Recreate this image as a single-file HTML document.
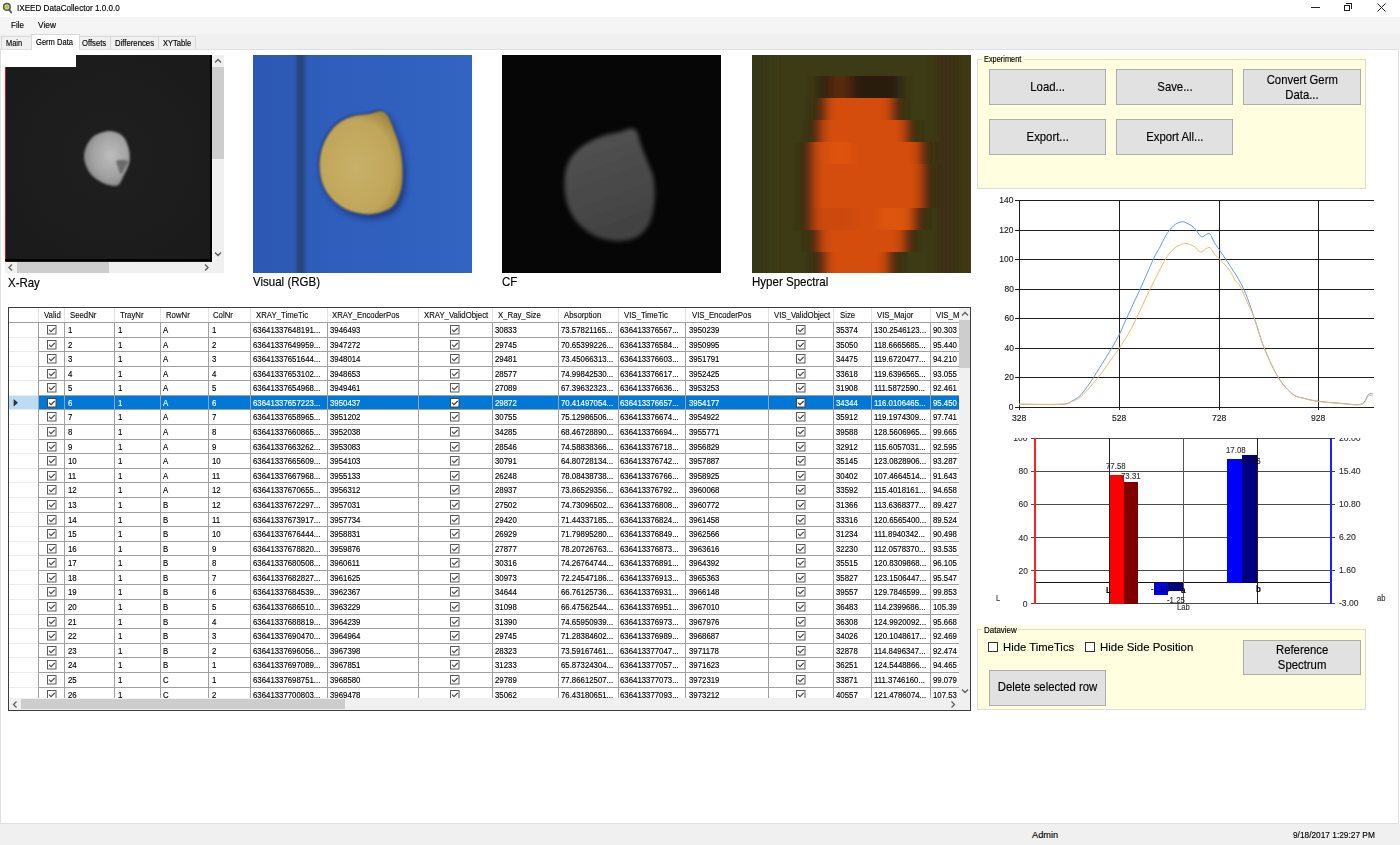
<!DOCTYPE html><html><head><meta charset="utf-8"><title>IXEED DataCollector</title><style>
*{margin:0;padding:0;box-sizing:border-box}
html,body{width:1400px;height:845px;overflow:hidden;background:#fff;font-family:"Liberation Sans",sans-serif;color:#000}
.a{position:absolute}
.t{position:absolute;white-space:nowrap;line-height:1;-webkit-text-stroke:0.15px currentColor}
.cb{position:absolute}
.btn{position:absolute;background:#e1e1e1;border:1px solid #adadad;font-size:11.5px;text-align:center;display:flex;align-items:center;justify-content:center;line-height:1.2;color:#000}
.gb{position:absolute;background:#ffffe0}
.gbb{position:absolute;border:1px solid #dcdcdc}
.hdr{font-size:7.8px;color:#111}
.cell{font-size:7.9px;color:#111}
.ax{font-size:8.6px;color:#222}
</style></head><body>
<div class="a" style="left:0;top:0;width:1400px;height:17px;background:#fff"></div>
<svg class="a" style="left:2px;top:2px" width="13" height="13" viewBox="0 0 13 13"><circle cx="4.9" cy="4.9" r="3.3" fill="#d4d890" stroke="#4f5a58" stroke-width="1.5"/><circle cx="4.9" cy="4.9" r="1.6" fill="#bcc40c"/><path d="M7.2 7.6 L9.2 10.6" stroke="#4f5a58" stroke-width="1.8" stroke-linecap="round"/></svg>
<div class="t" style="left:17px;top:3.98px;font-size:9px;color:#000;transform:scaleX(0.9);transform-origin:0 0;">IXEED DataCollector 1.0.0.0</div>
<div class="a" style="left:1311px;top:7px;width:9px;height:1px;background:#222"></div>
<div class="a" style="left:1344px;top:5px;width:6px;height:6px;border:1px solid #222;background:#fff"></div>
<div class="a" style="left:1346px;top:3px;width:6px;height:6px;border-top:1px solid #222;border-right:1px solid #222"></div>
<svg class="a" style="left:1377px;top:3px" width="10" height="9" viewBox="0 0 10 9"><path d="M0.5 0.5 L8.5 8.5 M8.5 0.5 L0.5 8.5" stroke="#222" stroke-width="1"/></svg>
<div class="a" style="left:0;top:17px;width:1400px;height:17px;background:#f5f5f5"></div>
<div class="t" style="left:11px;top:20.98px;font-size:9px;color:#000;transform:scaleX(0.9);transform-origin:0 0;">File</div>
<div class="t" style="left:38px;top:20.98px;font-size:9px;color:#000;transform:scaleX(0.93);transform-origin:0 0;">View</div>
<div class="a" style="left:0;top:34px;width:1400px;height:15px;background:#f0f0f0"></div>
<div class="a" style="left:1px;top:36px;width:31px;height:14px;border:1px solid #d9d9d9;border-bottom:none;background:#f0f0f0"></div>
<div class="t" style="left:6px;top:38.98px;font-size:9px;color:#000;transform:scaleX(0.82);transform-origin:0 0;">Main</div>
<div class="a" style="left:79px;top:36px;width:32px;height:14px;border:1px solid #d9d9d9;border-bottom:none;background:#f0f0f0"></div>
<div class="t" style="left:82px;top:38.98px;font-size:9px;color:#000;transform:scaleX(0.85);transform-origin:0 0;">Offsets</div>
<div class="a" style="left:110px;top:36px;width:49px;height:14px;border:1px solid #d9d9d9;border-bottom:none;background:#f0f0f0"></div>
<div class="t" style="left:115px;top:38.98px;font-size:9px;color:#000;transform:scaleX(0.86);transform-origin:0 0;">Differences</div>
<div class="a" style="left:158px;top:36px;width:38px;height:14px;border:1px solid #d9d9d9;border-bottom:none;background:#f0f0f0"></div>
<div class="t" style="left:163px;top:38.98px;font-size:9px;color:#000;transform:scaleX(0.84);transform-origin:0 0;">XYTable</div>
<div class="a" style="left:0;top:49px;width:1399px;height:775px;border:1px solid #e0e0e0;background:#fff"></div>
<div class="a" style="left:31px;top:34px;width:49px;height:16px;border:1px solid #d9d9d9;border-bottom:none;background:#fff"></div>
<div class="a" style="left:32px;top:49px;width:47px;height:2px;background:#fff"></div>
<div class="t" style="left:36px;top:37.58px;font-size:9px;color:#000;transform:scaleX(0.84);transform-origin:0 0;">Germ Data</div>
<div class="a" style="left:0;top:824px;width:1400px;height:21px;background:#f0f0f0"></div>
<div class="t" style="left:1032px;top:830.81px;font-size:9.2px;color:#000;">Admin</div>
<div class="t" style="left:1293px;top:830.71px;font-size:9.2px;color:#000;transform:scaleX(0.905);transform-origin:0 0;">9/18/2017 1:29:27 PM</div>
<div class="a" style="left:5px;top:55px;width:219px;height:218px;background:#f0f0f0"></div>
<svg class="a" style="left:5px;top:55px" width="207" height="207" viewBox="5 55 207 207">
<defs><radialGradient id="xg" cx="0.58" cy="0.45" r="0.65"><stop offset="0" stop-color="#bdbdbd"/><stop offset="0.6" stop-color="#a2a2a2"/><stop offset="1" stop-color="#808080"/></radialGradient>
<radialGradient id="xbg" cx="0.5" cy="0.5" r="0.75"><stop offset="0" stop-color="#1f1f1f"/><stop offset="1" stop-color="#1a1a1a"/></radialGradient>
<filter id="bl1" x="-0.2" y="-0.2" width="1.4" height="1.4"><feGaussianBlur stdDeviation="0.9"/></filter></defs>
<rect x="5" y="55" width="207" height="207" fill="url(#xbg)"/>
<rect x="5" y="55" width="1" height="207" fill="#e01010"/>
<path filter="url(#bl1)" d="M108.0 131.0 C112.0 130.5 115.2 131.7 118.0 133.0 C120.8 134.3 123.2 136.2 125.0 139.0 C126.8 141.8 128.2 146.3 129.0 150.0 C129.8 153.7 129.9 157.7 129.5 161.0 C129.1 164.3 127.7 167.2 126.5 170.0 C125.3 172.8 123.8 175.5 122.5 178.0 C121.2 180.5 120.4 183.8 118.5 185.0 C116.6 186.2 113.9 186.0 111.0 185.5 C108.1 185.0 104.2 183.7 101.0 182.0 C97.8 180.3 94.4 178.0 92.0 175.5 C89.6 173.0 87.8 170.1 86.5 167.0 C85.2 163.9 84.0 160.5 84.0 157.0 C84.0 153.5 84.8 149.5 86.5 146.0 C88.2 142.5 90.4 138.5 94.0 136.0 C97.6 133.5 104.0 131.5 108.0 131.0 Z" fill="url(#xg)"/>
<path filter="url(#bl1)" d="M116.5 161.0 C117.2 159.8 120.0 159.9 122.0 160.0 C124.0 160.1 128.0 160.2 128.5 161.5 C129.0 162.8 126.2 165.9 125.0 168.0 C123.8 170.1 122.2 174.2 121.0 174.0 C119.8 173.8 118.8 169.2 118.0 167.0 C117.2 164.8 115.8 162.2 116.5 161.0 Z" fill="#6a6a6a"/>
<rect x="210" y="55" width="2" height="207" fill="#000"/>
<rect x="5" y="259" width="207" height="2" fill="#000"/>
</svg>
<div class="a" style="left:5px;top:54px;width:71px;height:13px;background:#fff"></div>
<div class="a" style="left:76px;top:54px;width:136px;height:1px;background:#fff"></div>
<div class="a" style="left:212px;top:67px;width:12px;height:92px;background:#cdcdcd"></div>
<svg class="a" style="left:213px;top:57px" width="10" height="8" viewBox="0 0 10 8"><path d="M2 5.5 L5 2.5 L8 5.5" fill="none" stroke="#606060" stroke-width="1.4"/></svg>
<svg class="a" style="left:213px;top:250px" width="10" height="8" viewBox="0 0 10 8"><path d="M2 2.5 L5 5.5 L8 2.5" fill="none" stroke="#606060" stroke-width="1.4"/></svg>
<div class="a" style="left:17px;top:262px;width:92px;height:11px;background:#cdcdcd"></div>
<svg class="a" style="left:6px;top:263px" width="10" height="9" viewBox="0 0 10 9"><path d="M6 1.5 L3 4.5 L6 7.5" fill="none" stroke="#606060" stroke-width="1.4"/></svg>
<svg class="a" style="left:201px;top:263px" width="10" height="9" viewBox="0 0 10 9"><path d="M4 1.5 L7 4.5 L4 7.5" fill="none" stroke="#606060" stroke-width="1.4"/></svg>
<div class="t" style="left:8px;top:276.67px;font-size:12.2px;color:#000;transform:scaleX(0.94);transform-origin:0 0;">X-Ray</div>
<svg class="a" style="left:253px;top:54px" width="219" height="219" viewBox="253 54 219 219">
<defs>
<linearGradient id="vb" x1="0" x2="1" y1="0" y2="0"><stop offset="0" stop-color="#2c58b2"/><stop offset="0.4" stop-color="#2f5ebc"/><stop offset="1" stop-color="#3364c2"/></linearGradient>
<radialGradient id="vs" cx="0.45" cy="0.55" r="0.6"><stop offset="0" stop-color="#c8b06a"/><stop offset="0.75" stop-color="#c0a65a"/><stop offset="1" stop-color="#a08840"/></radialGradient>
<filter id="bl2" x="-0.3" y="-0.3" width="1.6" height="1.6"><feGaussianBlur stdDeviation="3"/></filter>
<filter id="bl3" x="-0.3" y="-0.1" width="1.6" height="1.2"><feGaussianBlur stdDeviation="0.8"/></filter>
<filter id="bl3b" x="-0.5" y="0" width="2" height="1"><feGaussianBlur stdDeviation="1.5 0"/></filter>
</defs>
<rect x="253" y="54" width="219" height="219" fill="url(#vb)"/>
<rect x="296" y="54" width="9" height="219" fill="#26467e" filter="url(#bl3b)"/>
<path filter="url(#bl2)" d="M381.0 111.0 C384.3 111.3 385.8 112.8 388.0 116.0 C390.2 119.2 392.0 124.7 394.0 130.0 C396.0 135.3 398.6 141.7 400.0 148.0 C401.4 154.3 402.3 161.0 402.5 168.0 C402.7 175.0 402.8 183.5 401.0 190.0 C399.2 196.5 396.8 203.0 392.0 207.0 C387.2 211.0 379.0 213.3 372.0 214.0 C365.0 214.7 356.3 213.2 350.0 211.0 C343.7 208.8 338.5 205.3 334.0 201.0 C329.5 196.7 325.4 191.0 323.0 185.0 C320.6 179.0 319.5 171.7 319.5 165.0 C319.5 158.3 320.6 151.3 323.0 145.0 C325.4 138.7 329.5 131.7 334.0 127.0 C338.5 122.3 344.3 119.2 350.0 117.0 C355.7 114.8 362.8 115.0 368.0 114.0 C373.2 113.0 377.7 110.7 381.0 111.0 Z" fill="#15296a" opacity="0.8" transform="translate(3,4)"/><path filter="url(#bl3)" d="M381.0 111.0 C384.3 111.3 385.8 112.8 388.0 116.0 C390.2 119.2 392.0 124.7 394.0 130.0 C396.0 135.3 398.6 141.7 400.0 148.0 C401.4 154.3 402.3 161.0 402.5 168.0 C402.7 175.0 402.8 183.5 401.0 190.0 C399.2 196.5 396.8 203.0 392.0 207.0 C387.2 211.0 379.0 213.3 372.0 214.0 C365.0 214.7 356.3 213.2 350.0 211.0 C343.7 208.8 338.5 205.3 334.0 201.0 C329.5 196.7 325.4 191.0 323.0 185.0 C320.6 179.0 319.5 171.7 319.5 165.0 C319.5 158.3 320.6 151.3 323.0 145.0 C325.4 138.7 329.5 131.7 334.0 127.0 C338.5 122.3 344.3 119.2 350.0 117.0 C355.7 114.8 362.8 115.0 368.0 114.0 C373.2 113.0 377.7 110.7 381.0 111.0 Z" fill="#1a2a60" opacity="0.8" transform="translate(-1,-1) scale(1.0)"/>
<path filter="url(#bl3)" d="M381.0 111.0 C384.3 111.3 385.8 112.8 388.0 116.0 C390.2 119.2 392.0 124.7 394.0 130.0 C396.0 135.3 398.6 141.7 400.0 148.0 C401.4 154.3 402.3 161.0 402.5 168.0 C402.7 175.0 402.8 183.5 401.0 190.0 C399.2 196.5 396.8 203.0 392.0 207.0 C387.2 211.0 379.0 213.3 372.0 214.0 C365.0 214.7 356.3 213.2 350.0 211.0 C343.7 208.8 338.5 205.3 334.0 201.0 C329.5 196.7 325.4 191.0 323.0 185.0 C320.6 179.0 319.5 171.7 319.5 165.0 C319.5 158.3 320.6 151.3 323.0 145.0 C325.4 138.7 329.5 131.7 334.0 127.0 C338.5 122.3 344.3 119.2 350.0 117.0 C355.7 114.8 362.8 115.0 368.0 114.0 C373.2 113.0 377.7 110.7 381.0 111.0 Z" fill="url(#vs)"/>
<rect x="253" y="54" width="219" height="1" fill="#fff"/>
</svg>
<div class="t" style="left:253px;top:276.40px;font-size:12.4px;color:#000;transform:scaleX(0.93);transform-origin:0 0;">Visual (RGB)</div>
<svg class="a" style="left:502px;top:54px" width="219" height="219" viewBox="502 54 219 219">
<defs><filter id="bl4" x="-0.2" y="-0.2" width="1.4" height="1.4"><feGaussianBlur stdDeviation="2.3"/></filter>
<linearGradient id="cg" x1="0" y1="0" x2="0.3" y2="1"><stop offset="0" stop-color="#545454"/><stop offset="1" stop-color="#424242"/></linearGradient></defs>
<rect x="502" y="54" width="219" height="219" fill="#060606"/>
<path filter="url(#bl4)" d="M631.0 128.5 C633.8 128.5 635.3 129.2 637.0 132.0 C638.7 134.8 639.2 139.8 641.0 145.0 C642.8 150.2 645.9 157.5 648.0 163.0 C650.1 168.5 652.4 171.8 653.5 178.0 C654.6 184.2 655.1 192.7 654.5 200.0 C653.9 207.3 652.9 215.8 650.0 222.0 C647.1 228.2 642.5 233.8 637.0 237.0 C631.5 240.2 624.0 241.2 617.0 241.0 C610.0 240.8 601.7 239.2 595.0 236.0 C588.3 232.8 581.7 227.5 577.0 222.0 C572.3 216.5 569.1 209.7 567.0 203.0 C564.9 196.3 564.3 188.7 564.5 182.0 C564.7 175.3 565.4 168.7 568.0 163.0 C570.6 157.3 574.7 152.3 580.0 148.0 C585.3 143.7 593.3 139.7 600.0 137.0 C606.7 134.3 614.8 133.4 620.0 132.0 C625.2 130.6 628.2 128.5 631.0 128.5 Z" fill="url(#cg)"/>
<rect x="502" y="54" width="219" height="1" fill="#fff"/>
</svg>
<div class="t" style="left:502px;top:276.40px;font-size:12.4px;color:#000;transform:scaleX(0.93);transform-origin:0 0;">CF</div>
<svg class="a" style="left:752px;top:54px" width="219" height="219" viewBox="752 54 219 219"><defs><filter id="bh" x="-0.3" y="-0.02" width="1.6" height="1.04"><feGaussianBlur stdDeviation="6 0.5"/></filter></defs><rect x="752" y="54" width="219" height="219" fill="#3d3b15"/><g filter="url(#bh)"><rect x="740" y="54" width="30" height="219" fill="#363813"/><rect x="938" y="54" width="20" height="219" fill="#3d2e12"/></g><g filter="url(#bh)"><rect x="818" y="76" width="84" height="22" fill="#2a220c"/><rect x="830" y="76" width="20" height="22" fill="#5a2a0c"/><rect x="850" y="76" width="40" height="22" fill="#2a1f0a"/><rect x="817" y="98" width="84" height="22" fill="#261e0a"/><rect x="812" y="120" width="103" height="22" fill="#261e0a"/><rect x="804" y="142" width="125" height="22" fill="#261e0a"/><rect x="804" y="164" width="127" height="22" fill="#261e0a"/><rect x="804" y="186" width="127" height="22" fill="#261e0a"/><rect x="804" y="208" width="119" height="22" fill="#261e0a"/><rect x="811" y="230" width="102" height="22" fill="#261e0a"/><rect x="817" y="252" width="80" height="22" fill="#261e0a"/><rect x="826" y="98" width="66" height="22" fill="#d44d0c"/><rect x="821" y="120" width="85" height="22" fill="#d44d0c"/><rect x="813" y="142" width="107" height="22" fill="#d44d0c"/><rect x="813" y="164" width="109" height="22" fill="#d44d0c"/><rect x="813" y="186" width="109" height="22" fill="#d44d0c"/><rect x="813" y="208" width="101" height="22" fill="#d44d0c"/><rect x="820" y="230" width="84" height="22" fill="#d44d0c"/><rect x="826" y="252" width="62" height="22" fill="#d44d0c"/><rect x="828" y="142" width="24" height="22" fill="#de530e"/><rect x="880" y="208" width="28" height="22" fill="#de560e"/><rect x="815" y="208" width="40" height="22" fill="#cc4a0c"/></g><rect x="752" y="54" width="219" height="1" fill="#fff"/></svg>
<div class="t" style="left:752px;top:276.40px;font-size:12.4px;color:#000;transform:scaleX(0.93);transform-origin:0 0;">Hyper Spectral</div>
<div class="gb" style="left:977px;top:55px;width:389px;height:134px"></div>
<div class="gbb" style="left:977px;top:59px;width:389px;height:130px"></div>
<div class="a" style="left:982px;top:56px;width:41px;height:8px;background:#ffffe0"></div>
<div class="t" style="left:983.5px;top:55.18px;font-size:9px;color:#000;transform:scaleX(0.82);transform-origin:0 0;">Experiment</div>
<div class="a" style="left:989px;top:69px;width:117px;height:36px;background:#e1e1e1;border:1px solid #adadad"></div>
<div class="t" style="left:989px;width:117px;top:80.67px;font-size:12.2px;text-align:center"><span style="display:inline-block;transform:scaleX(0.93)">Load...</span></div>
<div class="a" style="left:1116px;top:69px;width:117px;height:36px;background:#e1e1e1;border:1px solid #adadad"></div>
<div class="t" style="left:1116px;width:117px;top:80.67px;font-size:12.2px;text-align:center"><span style="display:inline-block;transform:scaleX(0.93)">Save...</span></div>
<div class="a" style="left:1243px;top:69px;width:118px;height:36px;background:#e1e1e1;border:1px solid #adadad"></div>
<div class="t" style="left:1243px;width:118px;top:73.97px;font-size:12.2px;text-align:center"><span style="display:inline-block;transform:scaleX(0.93)">Convert Germ</span></div>
<div class="t" style="left:1243px;width:118px;top:88.57px;font-size:12.2px;text-align:center"><span style="display:inline-block;transform:scaleX(0.93)">Data...</span></div>
<div class="a" style="left:989px;top:119px;width:117px;height:36px;background:#e1e1e1;border:1px solid #adadad"></div>
<div class="t" style="left:989px;width:117px;top:130.67px;font-size:12.2px;text-align:center"><span style="display:inline-block;transform:scaleX(0.93)">Export...</span></div>
<div class="a" style="left:1116px;top:119px;width:117px;height:36px;background:#e1e1e1;border:1px solid #adadad"></div>
<div class="t" style="left:1116px;width:117px;top:130.67px;font-size:12.2px;text-align:center"><span style="display:inline-block;transform:scaleX(0.93)">Export All...</span></div>
<div class="gb" style="left:977px;top:625px;width:389px;height:85px"></div>
<div class="gbb" style="left:977px;top:629px;width:389px;height:81px"></div>
<div class="a" style="left:982px;top:626px;width:36px;height:8px;background:#ffffe0"></div>
<div class="t" style="left:983.5px;top:625.69px;font-size:8.4px;color:#000;transform:scaleX(0.95);transform-origin:0 0;">Dataview</div>
<div class="a" style="left:988px;top:642px;width:10px;height:10px;border:1px solid #333;background:#fff"></div>
<div class="t" style="left:1003px;top:641.18px;font-size:11.6px;color:#000;transform:scaleX(0.975);transform-origin:0 0;">Hide TimeTics</div>
<div class="a" style="left:1085px;top:642px;width:10px;height:10px;border:1px solid #333;background:#fff"></div>
<div class="t" style="left:1100px;top:641.18px;font-size:11.6px;color:#000;transform:scaleX(0.985);transform-origin:0 0;">Hide Side Position</div>
<div class="a" style="left:1243px;top:640px;width:118px;height:35px;background:#e1e1e1;border:1px solid #adadad"></div>
<div class="t" style="left:1243px;width:118px;top:644.27px;font-size:12.2px;text-align:center"><span style="display:inline-block;transform:scaleX(0.93)">Reference</span></div>
<div class="t" style="left:1243px;width:118px;top:658.87px;font-size:12.2px;text-align:center"><span style="display:inline-block;transform:scaleX(0.93)">Spectrum</span></div>
<div class="a" style="left:989px;top:670px;width:117px;height:36px;background:#e1e1e1;border:1px solid #adadad"></div>
<div class="t" style="left:989px;width:117px;top:681.27px;font-size:12.2px;text-align:center"><span style="display:inline-block;transform:scaleX(0.93)">Delete selected row</span></div>
<svg class="a" style="left:980px;top:190px" width="420" height="240" viewBox="980 190 420 240" shape-rendering="crispEdges"><line x1="1015" y1="407.5" x2="1374" y2="407.5" stroke="#1e1e1e" stroke-width="1"/><line x1="1015" y1="377.5" x2="1374" y2="377.5" stroke="#1e1e1e" stroke-width="1"/><line x1="1015" y1="348.5" x2="1374" y2="348.5" stroke="#1e1e1e" stroke-width="1"/><line x1="1015" y1="318.5" x2="1374" y2="318.5" stroke="#1e1e1e" stroke-width="1"/><line x1="1015" y1="289.5" x2="1374" y2="289.5" stroke="#1e1e1e" stroke-width="1"/><line x1="1015" y1="259.5" x2="1374" y2="259.5" stroke="#1e1e1e" stroke-width="1"/><line x1="1015" y1="230.5" x2="1374" y2="230.5" stroke="#1e1e1e" stroke-width="1"/><line x1="1015" y1="200.5" x2="1374" y2="200.5" stroke="#1e1e1e" stroke-width="1"/><line x1="1019.5" y1="200" x2="1019.5" y2="410" stroke="#1e1e1e" stroke-width="1"/><line x1="1119.5" y1="200" x2="1119.5" y2="410" stroke="#1e1e1e" stroke-width="1"/><line x1="1219.5" y1="200" x2="1219.5" y2="410" stroke="#1e1e1e" stroke-width="1"/><line x1="1318.5" y1="200" x2="1318.5" y2="410" stroke="#1e1e1e" stroke-width="1"/></svg>
<div class="t" style="right:386.4px;top:402.10px;font-size:9.8px;color:#222;transform:scaleX(0.86);transform-origin:100% 0">0</div>
<div class="t" style="right:386.4px;top:372.10px;font-size:9.8px;color:#222;transform:scaleX(0.86);transform-origin:100% 0">20</div>
<div class="t" style="right:386.4px;top:343.10px;font-size:9.8px;color:#222;transform:scaleX(0.86);transform-origin:100% 0">40</div>
<div class="t" style="right:386.4px;top:313.10px;font-size:9.8px;color:#222;transform:scaleX(0.86);transform-origin:100% 0">60</div>
<div class="t" style="right:386.4px;top:284.10px;font-size:9.8px;color:#222;transform:scaleX(0.86);transform-origin:100% 0">80</div>
<div class="t" style="right:386.4px;top:254.10px;font-size:9.8px;color:#222;transform:scaleX(0.86);transform-origin:100% 0">100</div>
<div class="t" style="right:386.4px;top:225.10px;font-size:9.8px;color:#222;transform:scaleX(0.86);transform-origin:100% 0">120</div>
<div class="t" style="right:386.4px;top:195.10px;font-size:9.8px;color:#222;transform:scaleX(0.86);transform-origin:100% 0">140</div>
<div class="t" style="left:1004px;width:30px;text-align:center;top:412.50px;font-size:9.8px;color:#222"><span style="display:inline-block;transform:scaleX(0.88)">328</span></div>
<div class="t" style="left:1104px;width:30px;text-align:center;top:412.50px;font-size:9.8px;color:#222"><span style="display:inline-block;transform:scaleX(0.88)">528</span></div>
<div class="t" style="left:1204px;width:30px;text-align:center;top:412.50px;font-size:9.8px;color:#222"><span style="display:inline-block;transform:scaleX(0.88)">728</span></div>
<div class="t" style="left:1303px;width:30px;text-align:center;top:412.50px;font-size:9.8px;color:#222"><span style="display:inline-block;transform:scaleX(0.88)">928</span></div>
<svg class="a" style="left:980px;top:190px" width="420" height="240" viewBox="980 190 420 240"><path d="M1019.0 404.2 C1026.2 404.2 1053.2 404.7 1062.0 404.2 C1070.8 403.7 1068.8 402.6 1072.0 401.0 C1075.2 399.4 1077.7 398.3 1081.3 394.4 C1084.9 390.4 1089.8 383.0 1093.6 377.3 C1097.4 371.6 1101.4 364.8 1104.4 360.0 C1107.4 355.2 1109.0 352.7 1111.5 348.5 C1114.0 344.3 1116.8 339.6 1119.3 334.6 C1121.8 329.6 1123.1 325.8 1126.6 318.3 C1130.0 310.8 1135.5 299.2 1140.0 289.4 C1144.5 279.6 1150.0 266.5 1153.3 259.4 C1156.6 252.3 1157.9 250.9 1160.0 247.0 C1162.1 243.1 1163.4 239.3 1165.7 235.7 C1168.0 232.1 1171.2 227.9 1173.7 225.6 C1176.2 223.3 1178.7 222.5 1180.8 222.0 C1182.9 221.5 1183.9 221.8 1186.1 222.8 C1188.3 223.8 1191.6 225.4 1194.1 227.8 C1196.6 230.1 1199.1 235.5 1201.2 236.6 C1203.3 237.7 1205.0 234.7 1206.5 234.3 C1208.0 233.9 1208.7 232.6 1210.0 234.0 C1211.3 235.4 1212.9 240.1 1214.5 242.8 C1216.1 245.5 1217.0 246.3 1219.5 250.0 C1222.0 253.7 1226.4 260.1 1229.6 265.0 C1232.8 269.9 1235.8 274.5 1238.5 279.2 C1241.2 283.9 1242.9 286.9 1245.6 293.4 C1248.2 299.9 1251.3 309.2 1254.4 318.3 C1257.5 327.4 1260.2 338.0 1264.2 347.9 C1268.2 357.8 1273.7 369.8 1278.4 377.5 C1283.1 385.2 1288.2 390.5 1292.6 394.0 C1297.0 397.5 1300.7 397.3 1305.0 398.5 C1309.3 399.7 1312.5 400.4 1318.3 401.2 C1324.1 402.0 1332.8 402.7 1340.0 403.2 C1347.2 403.7 1356.6 405.6 1361.3 404.1 C1366.0 402.7 1366.4 396.2 1368.4 394.5 C1370.4 392.8 1372.3 394.1 1373.1 394.0 " fill="none" stroke="#5e9cf0" stroke-width="1"/><path d="M1019.0 404.3 C1026.2 404.3 1053.2 404.8 1062.0 404.3 C1070.8 403.8 1068.8 402.6 1072.0 401.3 C1075.2 400.0 1076.9 400.3 1081.3 396.3 C1085.7 392.3 1093.4 383.4 1098.3 377.3 C1103.2 371.2 1107.2 364.8 1110.7 360.0 C1114.2 355.2 1115.5 354.0 1119.1 348.5 C1122.6 343.0 1126.9 337.0 1132.0 327.2 C1137.1 317.4 1144.1 301.3 1149.7 289.9 C1155.3 278.5 1161.6 265.8 1165.7 258.8 C1169.8 251.9 1172.1 250.6 1174.6 248.2 C1177.1 245.8 1178.9 245.4 1180.8 244.6 C1182.7 243.8 1183.9 243.1 1186.1 243.4 C1188.3 243.7 1191.6 245.0 1194.1 246.4 C1196.5 247.8 1198.3 251.8 1200.8 252.0 C1203.3 252.2 1206.9 246.9 1209.2 247.3 C1211.5 247.7 1212.8 252.5 1214.5 254.4 C1216.2 256.3 1217.0 256.1 1219.5 258.8 C1222.0 261.5 1227.0 266.8 1229.6 270.4 C1232.2 273.9 1233.2 277.5 1235.0 280.1 C1236.8 282.8 1238.2 282.6 1240.2 286.3 C1242.2 290.0 1244.9 296.9 1247.3 302.3 C1249.7 307.7 1251.6 310.9 1254.4 318.5 C1257.2 326.1 1260.2 338.3 1264.2 348.2 C1268.2 358.1 1273.7 370.1 1278.4 377.8 C1283.1 385.5 1288.2 390.8 1292.6 394.3 C1297.0 397.8 1300.7 397.6 1305.0 398.8 C1309.3 400.0 1312.5 400.7 1318.3 401.5 C1324.1 402.3 1332.8 403.0 1340.0 403.5 C1347.2 404.0 1356.6 405.6 1361.3 404.4 C1366.0 403.1 1366.4 397.4 1368.4 396.0 C1370.4 394.6 1372.3 396.0 1373.1 396.0 " fill="none" stroke="#f9b865" stroke-width="1"/></svg>
<svg class="a" style="left:980px;top:425px" width="420" height="200" viewBox="980 425 420 200" shape-rendering="crispEdges"><line x1="1031" y1="603.5" x2="1335" y2="603.5" stroke="#4a4a4a" stroke-width="1"/><line x1="1031" y1="570.5" x2="1335" y2="570.5" stroke="#4a4a4a" stroke-width="1"/><line x1="1031" y1="537.5" x2="1335" y2="537.5" stroke="#4a4a4a" stroke-width="1"/><line x1="1031" y1="504.5" x2="1335" y2="504.5" stroke="#4a4a4a" stroke-width="1"/><line x1="1031" y1="471.5" x2="1335" y2="471.5" stroke="#4a4a4a" stroke-width="1"/><line x1="1031" y1="438.5" x2="1335" y2="438.5" stroke="#4a4a4a" stroke-width="1"/><line x1="1035" y1="582.5" x2="1331" y2="582.5" stroke="#111" stroke-width="1"/><line x1="1109.5" y1="438" x2="1109.5" y2="604" stroke="#222" stroke-width="1"/><line x1="1183.5" y1="438" x2="1183.5" y2="604" stroke="#555" stroke-width="1"/><line x1="1257.5" y1="438" x2="1257.5" y2="604" stroke="#222" stroke-width="1"/><rect x="1110" y="475" width="14" height="129" fill="#ff0000"/><rect x="1124" y="482" width="14" height="122" fill="#800000"/><rect x="1154" y="583" width="14" height="12" fill="#0000ff"/><rect x="1168" y="583" width="15" height="8" fill="#000080"/><rect x="1227" y="459" width="15" height="124" fill="#0000ff"/><rect x="1242" y="455" width="15" height="128" fill="#000080"/><rect x="1034" y="438" width="2" height="166" fill="#ff2020"/><rect x="1330" y="438" width="2" height="166" fill="#2020ff"/></svg>
<div class="t" style="right:372.20000000000005px;top:598.70px;font-size:9.8px;color:#333;transform:scaleX(0.86);transform-origin:100% 0">0</div>
<div class="t" style="right:372.20000000000005px;top:565.60px;font-size:9.8px;color:#333;transform:scaleX(0.86);transform-origin:100% 0">20</div>
<div class="t" style="right:372.20000000000005px;top:532.50px;font-size:9.8px;color:#333;transform:scaleX(0.86);transform-origin:100% 0">40</div>
<div class="t" style="right:372.20000000000005px;top:499.40px;font-size:9.8px;color:#333;transform:scaleX(0.86);transform-origin:100% 0">60</div>
<div class="t" style="right:372.20000000000005px;top:466.30px;font-size:9.8px;color:#333;transform:scaleX(0.86);transform-origin:100% 0">80</div>
<div class="t" style="right:372.20000000000005px;top:433.20px;font-size:9.8px;color:#333;transform:scaleX(0.86);transform-origin:100% 0">100</div>
<div class="t" style="left:1338.5px;top:432.90px;font-size:9.8px;color:#333;transform:scaleX(0.88);transform-origin:0 0">20.00</div>
<div class="t" style="left:1338.5px;top:466.00px;font-size:9.8px;color:#333;transform:scaleX(0.88);transform-origin:0 0">15.40</div>
<div class="t" style="left:1338.5px;top:499.10px;font-size:9.8px;color:#333;transform:scaleX(0.88);transform-origin:0 0">10.80</div>
<div class="t" style="left:1338.5px;top:532.20px;font-size:9.8px;color:#333;transform:scaleX(0.88);transform-origin:0 0">6.20</div>
<div class="t" style="left:1338.5px;top:565.30px;font-size:9.8px;color:#333;transform:scaleX(0.88);transform-origin:0 0">1.60</div>
<div class="t" style="left:1338.5px;top:598.40px;font-size:9.8px;color:#333;transform:scaleX(0.88);transform-origin:0 0">-3.00</div>
<div class="a" style="left:1000px;top:425px;width:375px;height:12.5px;background:#fff"></div>
<div class="t" style="left:1106.4px;top:460.70px;font-size:9.8px;color:#333;transform:scaleX(0.8);transform-origin:0 0">77.58</div>
<div class="t" style="left:1121px;top:470.70px;font-size:9.8px;color:#333;transform:scaleX(0.8);transform-origin:0 0">73.31</div>
<div class="t" style="left:1225.7px;top:444.70px;font-size:9.8px;color:#333;transform:scaleX(0.8);transform-origin:0 0">17.08</div>
<div class="t" style="left:1241px;top:455.70px;font-size:9.8px;color:#111;transform:scaleX(0.8);transform-origin:0 0">17.56</div>
<div class="t" style="left:1151px;top:583.70px;font-size:9.8px;color:#111;transform:scaleX(0.8);transform-origin:0 0">-1.91</div>
<div class="t" style="left:1167px;top:594.70px;font-size:9.8px;color:#333;transform:scaleX(0.8);transform-origin:0 0">-1.25</div>
<div class="t" style="left:1106px;top:585.04px;font-size:9.4px;color:#000;transform:scaleX(0.85);transform-origin:0 0"><b>L</b></div>
<div class="t" style="left:1181px;top:585.04px;font-size:9.4px;color:#000;transform:scaleX(0.85);transform-origin:0 0"><b>a</b></div>
<div class="t" style="left:1255.5px;top:584.04px;font-size:9.4px;color:#000;transform:scaleX(0.85);transform-origin:0 0"><b>b</b></div>
<div class="t" style="left:1177px;top:603.38px;font-size:9px;color:#333;transform:scaleX(0.85);transform-origin:0 0">Lab</div>
<div class="t" style="left:996px;top:594.38px;font-size:9px;color:#333;transform:scaleX(0.85);transform-origin:0 0">L</div>
<div class="t" style="left:1377px;top:594.38px;font-size:9px;color:#333;transform:scaleX(0.85);transform-origin:0 0">ab</div>
<div class="a" style="left:8px;top:307px;width:963px;height:404px;border:1px solid #3c3c3c;background:#fff"></div>
<div class="t" style="left:43.8px;top:311.28px;font-size:9px;color:#111;transform:scaleX(0.865);transform-origin:0 0;">Valid</div><div class="t" style="left:70px;top:311.28px;font-size:9px;color:#111;transform:scaleX(0.865);transform-origin:0 0;">SeedNr</div><div class="t" style="left:120px;top:311.28px;font-size:9px;color:#111;transform:scaleX(0.865);transform-origin:0 0;">TrayNr</div><div class="t" style="left:166.4px;top:311.28px;font-size:9px;color:#111;transform:scaleX(0.865);transform-origin:0 0;">RowNr</div><div class="t" style="left:212.9px;top:311.28px;font-size:9px;color:#111;transform:scaleX(0.865);transform-origin:0 0;">ColNr</div><div class="t" style="left:256.1px;top:311.28px;font-size:9px;color:#111;transform:scaleX(0.865);transform-origin:0 0;">XRAY_TimeTic</div><div class="t" style="left:332.3px;top:311.28px;font-size:9px;color:#111;transform:scaleX(0.865);transform-origin:0 0;">XRAY_EncoderPos</div><div class="t" style="left:423.6px;top:311.28px;font-size:9px;color:#111;transform:scaleX(0.865);transform-origin:0 0;">XRAY_ValidObject</div><div class="t" style="left:497.7px;top:311.28px;font-size:9px;color:#111;transform:scaleX(0.865);transform-origin:0 0;">X_Ray_Size</div><div class="t" style="left:563.8px;top:311.28px;font-size:9px;color:#111;transform:scaleX(0.865);transform-origin:0 0;">Absorption</div><div class="t" style="left:623.6px;top:311.28px;font-size:9px;color:#111;transform:scaleX(0.865);transform-origin:0 0;">VIS_TimeTic</div><div class="t" style="left:691.5px;top:311.28px;font-size:9px;color:#111;transform:scaleX(0.865);transform-origin:0 0;">VIS_EncoderPos</div><div class="t" style="left:773.8px;top:311.28px;font-size:9px;color:#111;transform:scaleX(0.865);transform-origin:0 0;">VIS_ValidObject</div><div class="t" style="left:839.5px;top:311.28px;font-size:9px;color:#111;transform:scaleX(0.865);transform-origin:0 0;">Size</div><div class="t" style="left:877px;top:311.28px;font-size:9px;color:#111;transform:scaleX(0.865);transform-origin:0 0;">VIS_Major</div><div class="t" style="left:936px;top:311.28px;font-size:9px;color:#111;transform:scaleX(0.865);transform-origin:0 0;">VIS_M</div><div class="a" style="left:38px;top:308px;width:1px;height:14px;background:#e2e2e2"></div><div class="a" style="left:64px;top:308px;width:1px;height:14px;background:#e2e2e2"></div><div class="a" style="left:114px;top:308px;width:1px;height:14px;background:#e2e2e2"></div><div class="a" style="left:160px;top:308px;width:1px;height:14px;background:#e2e2e2"></div><div class="a" style="left:208px;top:308px;width:1px;height:14px;background:#e2e2e2"></div><div class="a" style="left:250px;top:308px;width:1px;height:14px;background:#e2e2e2"></div><div class="a" style="left:327px;top:308px;width:1px;height:14px;background:#e2e2e2"></div><div class="a" style="left:418px;top:308px;width:1px;height:14px;background:#e2e2e2"></div><div class="a" style="left:492px;top:308px;width:1px;height:14px;background:#e2e2e2"></div><div class="a" style="left:558px;top:308px;width:1px;height:14px;background:#e2e2e2"></div><div class="a" style="left:618px;top:308px;width:1px;height:14px;background:#e2e2e2"></div><div class="a" style="left:685px;top:308px;width:1px;height:14px;background:#e2e2e2"></div><div class="a" style="left:768px;top:308px;width:1px;height:14px;background:#e2e2e2"></div><div class="a" style="left:833px;top:308px;width:1px;height:14px;background:#e2e2e2"></div><div class="a" style="left:871px;top:308px;width:1px;height:14px;background:#e2e2e2"></div><div class="a" style="left:930px;top:308px;width:1px;height:14px;background:#e2e2e2"></div><div class="a" style="left:9px;top:322px;width:950px;height:1px;background:#a0a0a0"></div><div class="a" style="left:9px;top:337px;width:29px;height:1px;background:#ececec"></div><div class="a" style="left:39px;top:337px;width:920px;height:1px;background:#a0a0a0"></div><div class="t" style="left:67.5px;top:325.88px;font-size:9px;color:#000;transform:scaleX(0.868);transform-origin:0 0;">1</div><div class="t" style="left:117.5px;top:325.88px;font-size:9px;color:#000;transform:scaleX(0.868);transform-origin:0 0;">1</div><div class="t" style="left:162.5px;top:325.88px;font-size:9px;color:#000;transform:scaleX(0.868);transform-origin:0 0;">A</div><div class="t" style="left:212px;top:325.88px;font-size:9px;color:#000;transform:scaleX(0.868);transform-origin:0 0;">1</div><div class="t" style="left:252.8px;top:325.88px;font-size:9px;color:#000;transform:scaleX(0.868);transform-origin:0 0;">63641337648191...</div><div class="t" style="left:329.5px;top:325.88px;font-size:9px;color:#000;transform:scaleX(0.868);transform-origin:0 0;">3946493</div><div class="t" style="left:495px;top:325.88px;font-size:9px;color:#000;transform:scaleX(0.868);transform-origin:0 0;">30833</div><div class="t" style="left:560.8px;top:325.88px;font-size:9px;color:#000;transform:scaleX(0.868);transform-origin:0 0;">73.57821165...</div><div class="t" style="left:620.2px;top:325.88px;font-size:9px;color:#000;transform:scaleX(0.868);transform-origin:0 0;">636413376567...</div><div class="t" style="left:688.6px;top:325.88px;font-size:9px;color:#000;transform:scaleX(0.868);transform-origin:0 0;">3950239</div><div class="t" style="left:836.3px;top:325.88px;font-size:9px;color:#000;transform:scaleX(0.868);transform-origin:0 0;">35374</div><div class="t" style="left:874.3px;top:325.88px;font-size:9px;color:#000;transform:scaleX(0.868);transform-origin:0 0;">130.2546123...</div><div class="t" style="left:932.8px;top:325.88px;font-size:9px;color:#000;transform:scaleX(0.868);transform-origin:0 0;">90.303</div><svg class="cb" style="left:47px;top:325px" width="10" height="10" viewBox="0 0 10 10"><rect x="0.5" y="0.5" width="8.5" height="8.5" fill="#fff" stroke="#5a5a5a" stroke-width="1"/><path d="M2 4.7 L4 6.7 L7.7 3" fill="none" stroke="#4a4a4a" stroke-width="1.1"/></svg><svg class="cb" style="left:450px;top:325px" width="10" height="10" viewBox="0 0 10 10"><rect x="0.5" y="0.5" width="8.5" height="8.5" fill="#fff" stroke="#5a5a5a" stroke-width="1"/><path d="M2 4.7 L4 6.7 L7.7 3" fill="none" stroke="#4a4a4a" stroke-width="1.1"/></svg><svg class="cb" style="left:796px;top:325px" width="10" height="10" viewBox="0 0 10 10"><rect x="0.5" y="0.5" width="8.5" height="8.5" fill="#fff" stroke="#5a5a5a" stroke-width="1"/><path d="M2 4.7 L4 6.7 L7.7 3" fill="none" stroke="#4a4a4a" stroke-width="1.1"/></svg><div class="a" style="left:9px;top:351px;width:29px;height:1px;background:#ececec"></div><div class="a" style="left:39px;top:351px;width:920px;height:1px;background:#a0a0a0"></div><div class="t" style="left:67.5px;top:340.88px;font-size:9px;color:#000;transform:scaleX(0.868);transform-origin:0 0;">2</div><div class="t" style="left:117.5px;top:340.88px;font-size:9px;color:#000;transform:scaleX(0.868);transform-origin:0 0;">1</div><div class="t" style="left:162.5px;top:340.88px;font-size:9px;color:#000;transform:scaleX(0.868);transform-origin:0 0;">A</div><div class="t" style="left:212px;top:340.88px;font-size:9px;color:#000;transform:scaleX(0.868);transform-origin:0 0;">2</div><div class="t" style="left:252.8px;top:340.88px;font-size:9px;color:#000;transform:scaleX(0.868);transform-origin:0 0;">63641337649959...</div><div class="t" style="left:329.5px;top:340.88px;font-size:9px;color:#000;transform:scaleX(0.868);transform-origin:0 0;">3947272</div><div class="t" style="left:495px;top:340.88px;font-size:9px;color:#000;transform:scaleX(0.868);transform-origin:0 0;">29745</div><div class="t" style="left:560.8px;top:340.88px;font-size:9px;color:#000;transform:scaleX(0.868);transform-origin:0 0;">70.65399226...</div><div class="t" style="left:620.2px;top:340.88px;font-size:9px;color:#000;transform:scaleX(0.868);transform-origin:0 0;">636413376584...</div><div class="t" style="left:688.6px;top:340.88px;font-size:9px;color:#000;transform:scaleX(0.868);transform-origin:0 0;">3950995</div><div class="t" style="left:836.3px;top:340.88px;font-size:9px;color:#000;transform:scaleX(0.868);transform-origin:0 0;">35050</div><div class="t" style="left:874.3px;top:340.88px;font-size:9px;color:#000;transform:scaleX(0.868);transform-origin:0 0;">118.6665685...</div><div class="t" style="left:932.8px;top:340.88px;font-size:9px;color:#000;transform:scaleX(0.868);transform-origin:0 0;">95.440</div><svg class="cb" style="left:47px;top:340px" width="10" height="10" viewBox="0 0 10 10"><rect x="0.5" y="0.5" width="8.5" height="8.5" fill="#fff" stroke="#5a5a5a" stroke-width="1"/><path d="M2 4.7 L4 6.7 L7.7 3" fill="none" stroke="#4a4a4a" stroke-width="1.1"/></svg><svg class="cb" style="left:450px;top:340px" width="10" height="10" viewBox="0 0 10 10"><rect x="0.5" y="0.5" width="8.5" height="8.5" fill="#fff" stroke="#5a5a5a" stroke-width="1"/><path d="M2 4.7 L4 6.7 L7.7 3" fill="none" stroke="#4a4a4a" stroke-width="1.1"/></svg><svg class="cb" style="left:796px;top:340px" width="10" height="10" viewBox="0 0 10 10"><rect x="0.5" y="0.5" width="8.5" height="8.5" fill="#fff" stroke="#5a5a5a" stroke-width="1"/><path d="M2 4.7 L4 6.7 L7.7 3" fill="none" stroke="#4a4a4a" stroke-width="1.1"/></svg><div class="a" style="left:9px;top:366px;width:29px;height:1px;background:#ececec"></div><div class="a" style="left:39px;top:366px;width:920px;height:1px;background:#a0a0a0"></div><div class="t" style="left:67.5px;top:354.88px;font-size:9px;color:#000;transform:scaleX(0.868);transform-origin:0 0;">3</div><div class="t" style="left:117.5px;top:354.88px;font-size:9px;color:#000;transform:scaleX(0.868);transform-origin:0 0;">1</div><div class="t" style="left:162.5px;top:354.88px;font-size:9px;color:#000;transform:scaleX(0.868);transform-origin:0 0;">A</div><div class="t" style="left:212px;top:354.88px;font-size:9px;color:#000;transform:scaleX(0.868);transform-origin:0 0;">3</div><div class="t" style="left:252.8px;top:354.88px;font-size:9px;color:#000;transform:scaleX(0.868);transform-origin:0 0;">63641337651644...</div><div class="t" style="left:329.5px;top:354.88px;font-size:9px;color:#000;transform:scaleX(0.868);transform-origin:0 0;">3948014</div><div class="t" style="left:495px;top:354.88px;font-size:9px;color:#000;transform:scaleX(0.868);transform-origin:0 0;">29481</div><div class="t" style="left:560.8px;top:354.88px;font-size:9px;color:#000;transform:scaleX(0.868);transform-origin:0 0;">73.45066313...</div><div class="t" style="left:620.2px;top:354.88px;font-size:9px;color:#000;transform:scaleX(0.868);transform-origin:0 0;">636413376603...</div><div class="t" style="left:688.6px;top:354.88px;font-size:9px;color:#000;transform:scaleX(0.868);transform-origin:0 0;">3951791</div><div class="t" style="left:836.3px;top:354.88px;font-size:9px;color:#000;transform:scaleX(0.868);transform-origin:0 0;">34475</div><div class="t" style="left:874.3px;top:354.88px;font-size:9px;color:#000;transform:scaleX(0.868);transform-origin:0 0;">119.6720477...</div><div class="t" style="left:932.8px;top:354.88px;font-size:9px;color:#000;transform:scaleX(0.868);transform-origin:0 0;">94.210</div><svg class="cb" style="left:47px;top:354px" width="10" height="10" viewBox="0 0 10 10"><rect x="0.5" y="0.5" width="8.5" height="8.5" fill="#fff" stroke="#5a5a5a" stroke-width="1"/><path d="M2 4.7 L4 6.7 L7.7 3" fill="none" stroke="#4a4a4a" stroke-width="1.1"/></svg><svg class="cb" style="left:450px;top:354px" width="10" height="10" viewBox="0 0 10 10"><rect x="0.5" y="0.5" width="8.5" height="8.5" fill="#fff" stroke="#5a5a5a" stroke-width="1"/><path d="M2 4.7 L4 6.7 L7.7 3" fill="none" stroke="#4a4a4a" stroke-width="1.1"/></svg><svg class="cb" style="left:796px;top:354px" width="10" height="10" viewBox="0 0 10 10"><rect x="0.5" y="0.5" width="8.5" height="8.5" fill="#fff" stroke="#5a5a5a" stroke-width="1"/><path d="M2 4.7 L4 6.7 L7.7 3" fill="none" stroke="#4a4a4a" stroke-width="1.1"/></svg><div class="a" style="left:9px;top:380px;width:29px;height:1px;background:#ececec"></div><div class="a" style="left:39px;top:380px;width:920px;height:1px;background:#a0a0a0"></div><div class="t" style="left:67.5px;top:369.88px;font-size:9px;color:#000;transform:scaleX(0.868);transform-origin:0 0;">4</div><div class="t" style="left:117.5px;top:369.88px;font-size:9px;color:#000;transform:scaleX(0.868);transform-origin:0 0;">1</div><div class="t" style="left:162.5px;top:369.88px;font-size:9px;color:#000;transform:scaleX(0.868);transform-origin:0 0;">A</div><div class="t" style="left:212px;top:369.88px;font-size:9px;color:#000;transform:scaleX(0.868);transform-origin:0 0;">4</div><div class="t" style="left:252.8px;top:369.88px;font-size:9px;color:#000;transform:scaleX(0.868);transform-origin:0 0;">63641337653102...</div><div class="t" style="left:329.5px;top:369.88px;font-size:9px;color:#000;transform:scaleX(0.868);transform-origin:0 0;">3948653</div><div class="t" style="left:495px;top:369.88px;font-size:9px;color:#000;transform:scaleX(0.868);transform-origin:0 0;">28577</div><div class="t" style="left:560.8px;top:369.88px;font-size:9px;color:#000;transform:scaleX(0.868);transform-origin:0 0;">74.99842530...</div><div class="t" style="left:620.2px;top:369.88px;font-size:9px;color:#000;transform:scaleX(0.868);transform-origin:0 0;">636413376617...</div><div class="t" style="left:688.6px;top:369.88px;font-size:9px;color:#000;transform:scaleX(0.868);transform-origin:0 0;">3952425</div><div class="t" style="left:836.3px;top:369.88px;font-size:9px;color:#000;transform:scaleX(0.868);transform-origin:0 0;">33618</div><div class="t" style="left:874.3px;top:369.88px;font-size:9px;color:#000;transform:scaleX(0.868);transform-origin:0 0;">119.6396565...</div><div class="t" style="left:932.8px;top:369.88px;font-size:9px;color:#000;transform:scaleX(0.868);transform-origin:0 0;">93.055</div><svg class="cb" style="left:47px;top:369px" width="10" height="10" viewBox="0 0 10 10"><rect x="0.5" y="0.5" width="8.5" height="8.5" fill="#fff" stroke="#5a5a5a" stroke-width="1"/><path d="M2 4.7 L4 6.7 L7.7 3" fill="none" stroke="#4a4a4a" stroke-width="1.1"/></svg><svg class="cb" style="left:450px;top:369px" width="10" height="10" viewBox="0 0 10 10"><rect x="0.5" y="0.5" width="8.5" height="8.5" fill="#fff" stroke="#5a5a5a" stroke-width="1"/><path d="M2 4.7 L4 6.7 L7.7 3" fill="none" stroke="#4a4a4a" stroke-width="1.1"/></svg><svg class="cb" style="left:796px;top:369px" width="10" height="10" viewBox="0 0 10 10"><rect x="0.5" y="0.5" width="8.5" height="8.5" fill="#fff" stroke="#5a5a5a" stroke-width="1"/><path d="M2 4.7 L4 6.7 L7.7 3" fill="none" stroke="#4a4a4a" stroke-width="1.1"/></svg><div class="a" style="left:9px;top:395px;width:29px;height:1px;background:#ececec"></div><div class="a" style="left:39px;top:395px;width:920px;height:1px;background:#a0a0a0"></div><div class="t" style="left:67.5px;top:383.88px;font-size:9px;color:#000;transform:scaleX(0.868);transform-origin:0 0;">5</div><div class="t" style="left:117.5px;top:383.88px;font-size:9px;color:#000;transform:scaleX(0.868);transform-origin:0 0;">1</div><div class="t" style="left:162.5px;top:383.88px;font-size:9px;color:#000;transform:scaleX(0.868);transform-origin:0 0;">A</div><div class="t" style="left:212px;top:383.88px;font-size:9px;color:#000;transform:scaleX(0.868);transform-origin:0 0;">5</div><div class="t" style="left:252.8px;top:383.88px;font-size:9px;color:#000;transform:scaleX(0.868);transform-origin:0 0;">63641337654968...</div><div class="t" style="left:329.5px;top:383.88px;font-size:9px;color:#000;transform:scaleX(0.868);transform-origin:0 0;">3949461</div><div class="t" style="left:495px;top:383.88px;font-size:9px;color:#000;transform:scaleX(0.868);transform-origin:0 0;">27089</div><div class="t" style="left:560.8px;top:383.88px;font-size:9px;color:#000;transform:scaleX(0.868);transform-origin:0 0;">67.39632323...</div><div class="t" style="left:620.2px;top:383.88px;font-size:9px;color:#000;transform:scaleX(0.868);transform-origin:0 0;">636413376636...</div><div class="t" style="left:688.6px;top:383.88px;font-size:9px;color:#000;transform:scaleX(0.868);transform-origin:0 0;">3953253</div><div class="t" style="left:836.3px;top:383.88px;font-size:9px;color:#000;transform:scaleX(0.868);transform-origin:0 0;">31908</div><div class="t" style="left:874.3px;top:383.88px;font-size:9px;color:#000;transform:scaleX(0.868);transform-origin:0 0;">111.5872590...</div><div class="t" style="left:932.8px;top:383.88px;font-size:9px;color:#000;transform:scaleX(0.868);transform-origin:0 0;">92.461</div><svg class="cb" style="left:47px;top:383px" width="10" height="10" viewBox="0 0 10 10"><rect x="0.5" y="0.5" width="8.5" height="8.5" fill="#fff" stroke="#5a5a5a" stroke-width="1"/><path d="M2 4.7 L4 6.7 L7.7 3" fill="none" stroke="#4a4a4a" stroke-width="1.1"/></svg><svg class="cb" style="left:450px;top:383px" width="10" height="10" viewBox="0 0 10 10"><rect x="0.5" y="0.5" width="8.5" height="8.5" fill="#fff" stroke="#5a5a5a" stroke-width="1"/><path d="M2 4.7 L4 6.7 L7.7 3" fill="none" stroke="#4a4a4a" stroke-width="1.1"/></svg><svg class="cb" style="left:796px;top:383px" width="10" height="10" viewBox="0 0 10 10"><rect x="0.5" y="0.5" width="8.5" height="8.5" fill="#fff" stroke="#5a5a5a" stroke-width="1"/><path d="M2 4.7 L4 6.7 L7.7 3" fill="none" stroke="#4a4a4a" stroke-width="1.1"/></svg><div class="a" style="left:9px;top:396px;width:29px;height:13px;background:#bcdcf4"></div><div class="a" style="left:39px;top:396px;width:920px;height:13px;background:#0078d7"></div><svg class="a" style="left:13px;top:399px" width="6" height="8" viewBox="0 0 6 8"><path d="M0.6 0 L5 3.8 L0.6 7.6 Z" fill="#333"/></svg><div class="a" style="left:9px;top:409px;width:29px;height:1px;background:#ececec"></div><div class="a" style="left:39px;top:409px;width:920px;height:1px;background:#a0a0a0"></div><div class="t" style="left:67.5px;top:398.88px;font-size:9px;color:#fff;transform:scaleX(0.868);transform-origin:0 0;">6</div><div class="t" style="left:117.5px;top:398.88px;font-size:9px;color:#fff;transform:scaleX(0.868);transform-origin:0 0;">1</div><div class="t" style="left:162.5px;top:398.88px;font-size:9px;color:#fff;transform:scaleX(0.868);transform-origin:0 0;">A</div><div class="t" style="left:212px;top:398.88px;font-size:9px;color:#fff;transform:scaleX(0.868);transform-origin:0 0;">6</div><div class="t" style="left:252.8px;top:398.88px;font-size:9px;color:#fff;transform:scaleX(0.868);transform-origin:0 0;">63641337657223...</div><div class="t" style="left:329.5px;top:398.88px;font-size:9px;color:#fff;transform:scaleX(0.868);transform-origin:0 0;">3950437</div><div class="t" style="left:495px;top:398.88px;font-size:9px;color:#fff;transform:scaleX(0.868);transform-origin:0 0;">29872</div><div class="t" style="left:560.8px;top:398.88px;font-size:9px;color:#fff;transform:scaleX(0.868);transform-origin:0 0;">70.41497054...</div><div class="t" style="left:620.2px;top:398.88px;font-size:9px;color:#fff;transform:scaleX(0.868);transform-origin:0 0;">636413376657...</div><div class="t" style="left:688.6px;top:398.88px;font-size:9px;color:#fff;transform:scaleX(0.868);transform-origin:0 0;">3954177</div><div class="t" style="left:836.3px;top:398.88px;font-size:9px;color:#fff;transform:scaleX(0.868);transform-origin:0 0;">34344</div><div class="t" style="left:874.3px;top:398.88px;font-size:9px;color:#fff;transform:scaleX(0.868);transform-origin:0 0;">116.0106465...</div><div class="t" style="left:932.8px;top:398.88px;font-size:9px;color:#fff;transform:scaleX(0.868);transform-origin:0 0;">95.450</div><svg class="cb" style="left:47px;top:398px" width="10" height="10" viewBox="0 0 10 10"><rect x="0.5" y="0.5" width="8.5" height="8.5" fill="#fff" stroke="#444" stroke-width="1"/><path d="M2 4.7 L4 6.7 L7.7 3" fill="none" stroke="#333" stroke-width="1.1"/></svg><svg class="cb" style="left:450px;top:398px" width="10" height="10" viewBox="0 0 10 10"><rect x="0.5" y="0.5" width="8.5" height="8.5" fill="#fff" stroke="#444" stroke-width="1"/><path d="M2 4.7 L4 6.7 L7.7 3" fill="none" stroke="#333" stroke-width="1.1"/></svg><svg class="cb" style="left:796px;top:398px" width="10" height="10" viewBox="0 0 10 10"><rect x="0.5" y="0.5" width="8.5" height="8.5" fill="#fff" stroke="#444" stroke-width="1"/><path d="M2 4.7 L4 6.7 L7.7 3" fill="none" stroke="#333" stroke-width="1.1"/></svg><div class="a" style="left:9px;top:424px;width:29px;height:1px;background:#ececec"></div><div class="a" style="left:39px;top:424px;width:920px;height:1px;background:#a0a0a0"></div><div class="t" style="left:67.5px;top:412.88px;font-size:9px;color:#000;transform:scaleX(0.868);transform-origin:0 0;">7</div><div class="t" style="left:117.5px;top:412.88px;font-size:9px;color:#000;transform:scaleX(0.868);transform-origin:0 0;">1</div><div class="t" style="left:162.5px;top:412.88px;font-size:9px;color:#000;transform:scaleX(0.868);transform-origin:0 0;">A</div><div class="t" style="left:212px;top:412.88px;font-size:9px;color:#000;transform:scaleX(0.868);transform-origin:0 0;">7</div><div class="t" style="left:252.8px;top:412.88px;font-size:9px;color:#000;transform:scaleX(0.868);transform-origin:0 0;">63641337658965...</div><div class="t" style="left:329.5px;top:412.88px;font-size:9px;color:#000;transform:scaleX(0.868);transform-origin:0 0;">3951202</div><div class="t" style="left:495px;top:412.88px;font-size:9px;color:#000;transform:scaleX(0.868);transform-origin:0 0;">30755</div><div class="t" style="left:560.8px;top:412.88px;font-size:9px;color:#000;transform:scaleX(0.868);transform-origin:0 0;">75.12986506...</div><div class="t" style="left:620.2px;top:412.88px;font-size:9px;color:#000;transform:scaleX(0.868);transform-origin:0 0;">636413376674...</div><div class="t" style="left:688.6px;top:412.88px;font-size:9px;color:#000;transform:scaleX(0.868);transform-origin:0 0;">3954922</div><div class="t" style="left:836.3px;top:412.88px;font-size:9px;color:#000;transform:scaleX(0.868);transform-origin:0 0;">35912</div><div class="t" style="left:874.3px;top:412.88px;font-size:9px;color:#000;transform:scaleX(0.868);transform-origin:0 0;">119.1974309...</div><div class="t" style="left:932.8px;top:412.88px;font-size:9px;color:#000;transform:scaleX(0.868);transform-origin:0 0;">97.741</div><svg class="cb" style="left:47px;top:412px" width="10" height="10" viewBox="0 0 10 10"><rect x="0.5" y="0.5" width="8.5" height="8.5" fill="#fff" stroke="#5a5a5a" stroke-width="1"/><path d="M2 4.7 L4 6.7 L7.7 3" fill="none" stroke="#4a4a4a" stroke-width="1.1"/></svg><svg class="cb" style="left:450px;top:412px" width="10" height="10" viewBox="0 0 10 10"><rect x="0.5" y="0.5" width="8.5" height="8.5" fill="#fff" stroke="#5a5a5a" stroke-width="1"/><path d="M2 4.7 L4 6.7 L7.7 3" fill="none" stroke="#4a4a4a" stroke-width="1.1"/></svg><svg class="cb" style="left:796px;top:412px" width="10" height="10" viewBox="0 0 10 10"><rect x="0.5" y="0.5" width="8.5" height="8.5" fill="#fff" stroke="#5a5a5a" stroke-width="1"/><path d="M2 4.7 L4 6.7 L7.7 3" fill="none" stroke="#4a4a4a" stroke-width="1.1"/></svg><div class="a" style="left:9px;top:439px;width:29px;height:1px;background:#ececec"></div><div class="a" style="left:39px;top:439px;width:920px;height:1px;background:#a0a0a0"></div><div class="t" style="left:67.5px;top:427.88px;font-size:9px;color:#000;transform:scaleX(0.868);transform-origin:0 0;">8</div><div class="t" style="left:117.5px;top:427.88px;font-size:9px;color:#000;transform:scaleX(0.868);transform-origin:0 0;">1</div><div class="t" style="left:162.5px;top:427.88px;font-size:9px;color:#000;transform:scaleX(0.868);transform-origin:0 0;">A</div><div class="t" style="left:212px;top:427.88px;font-size:9px;color:#000;transform:scaleX(0.868);transform-origin:0 0;">8</div><div class="t" style="left:252.8px;top:427.88px;font-size:9px;color:#000;transform:scaleX(0.868);transform-origin:0 0;">63641337660865...</div><div class="t" style="left:329.5px;top:427.88px;font-size:9px;color:#000;transform:scaleX(0.868);transform-origin:0 0;">3952038</div><div class="t" style="left:495px;top:427.88px;font-size:9px;color:#000;transform:scaleX(0.868);transform-origin:0 0;">34285</div><div class="t" style="left:560.8px;top:427.88px;font-size:9px;color:#000;transform:scaleX(0.868);transform-origin:0 0;">68.46728890...</div><div class="t" style="left:620.2px;top:427.88px;font-size:9px;color:#000;transform:scaleX(0.868);transform-origin:0 0;">636413376694...</div><div class="t" style="left:688.6px;top:427.88px;font-size:9px;color:#000;transform:scaleX(0.868);transform-origin:0 0;">3955771</div><div class="t" style="left:836.3px;top:427.88px;font-size:9px;color:#000;transform:scaleX(0.868);transform-origin:0 0;">39588</div><div class="t" style="left:874.3px;top:427.88px;font-size:9px;color:#000;transform:scaleX(0.868);transform-origin:0 0;">128.5606965...</div><div class="t" style="left:932.8px;top:427.88px;font-size:9px;color:#000;transform:scaleX(0.868);transform-origin:0 0;">99.665</div><svg class="cb" style="left:47px;top:427px" width="10" height="10" viewBox="0 0 10 10"><rect x="0.5" y="0.5" width="8.5" height="8.5" fill="#fff" stroke="#5a5a5a" stroke-width="1"/><path d="M2 4.7 L4 6.7 L7.7 3" fill="none" stroke="#4a4a4a" stroke-width="1.1"/></svg><svg class="cb" style="left:450px;top:427px" width="10" height="10" viewBox="0 0 10 10"><rect x="0.5" y="0.5" width="8.5" height="8.5" fill="#fff" stroke="#5a5a5a" stroke-width="1"/><path d="M2 4.7 L4 6.7 L7.7 3" fill="none" stroke="#4a4a4a" stroke-width="1.1"/></svg><svg class="cb" style="left:796px;top:427px" width="10" height="10" viewBox="0 0 10 10"><rect x="0.5" y="0.5" width="8.5" height="8.5" fill="#fff" stroke="#5a5a5a" stroke-width="1"/><path d="M2 4.7 L4 6.7 L7.7 3" fill="none" stroke="#4a4a4a" stroke-width="1.1"/></svg><div class="a" style="left:9px;top:453px;width:29px;height:1px;background:#ececec"></div><div class="a" style="left:39px;top:453px;width:920px;height:1px;background:#a0a0a0"></div><div class="t" style="left:67.5px;top:442.88px;font-size:9px;color:#000;transform:scaleX(0.868);transform-origin:0 0;">9</div><div class="t" style="left:117.5px;top:442.88px;font-size:9px;color:#000;transform:scaleX(0.868);transform-origin:0 0;">1</div><div class="t" style="left:162.5px;top:442.88px;font-size:9px;color:#000;transform:scaleX(0.868);transform-origin:0 0;">A</div><div class="t" style="left:212px;top:442.88px;font-size:9px;color:#000;transform:scaleX(0.868);transform-origin:0 0;">9</div><div class="t" style="left:252.8px;top:442.88px;font-size:9px;color:#000;transform:scaleX(0.868);transform-origin:0 0;">63641337663262...</div><div class="t" style="left:329.5px;top:442.88px;font-size:9px;color:#000;transform:scaleX(0.868);transform-origin:0 0;">3953083</div><div class="t" style="left:495px;top:442.88px;font-size:9px;color:#000;transform:scaleX(0.868);transform-origin:0 0;">28546</div><div class="t" style="left:560.8px;top:442.88px;font-size:9px;color:#000;transform:scaleX(0.868);transform-origin:0 0;">74.58838366...</div><div class="t" style="left:620.2px;top:442.88px;font-size:9px;color:#000;transform:scaleX(0.868);transform-origin:0 0;">636413376718...</div><div class="t" style="left:688.6px;top:442.88px;font-size:9px;color:#000;transform:scaleX(0.868);transform-origin:0 0;">3956829</div><div class="t" style="left:836.3px;top:442.88px;font-size:9px;color:#000;transform:scaleX(0.868);transform-origin:0 0;">32912</div><div class="t" style="left:874.3px;top:442.88px;font-size:9px;color:#000;transform:scaleX(0.868);transform-origin:0 0;">115.6057031...</div><div class="t" style="left:932.8px;top:442.88px;font-size:9px;color:#000;transform:scaleX(0.868);transform-origin:0 0;">92.595</div><svg class="cb" style="left:47px;top:442px" width="10" height="10" viewBox="0 0 10 10"><rect x="0.5" y="0.5" width="8.5" height="8.5" fill="#fff" stroke="#5a5a5a" stroke-width="1"/><path d="M2 4.7 L4 6.7 L7.7 3" fill="none" stroke="#4a4a4a" stroke-width="1.1"/></svg><svg class="cb" style="left:450px;top:442px" width="10" height="10" viewBox="0 0 10 10"><rect x="0.5" y="0.5" width="8.5" height="8.5" fill="#fff" stroke="#5a5a5a" stroke-width="1"/><path d="M2 4.7 L4 6.7 L7.7 3" fill="none" stroke="#4a4a4a" stroke-width="1.1"/></svg><svg class="cb" style="left:796px;top:442px" width="10" height="10" viewBox="0 0 10 10"><rect x="0.5" y="0.5" width="8.5" height="8.5" fill="#fff" stroke="#5a5a5a" stroke-width="1"/><path d="M2 4.7 L4 6.7 L7.7 3" fill="none" stroke="#4a4a4a" stroke-width="1.1"/></svg><div class="a" style="left:9px;top:468px;width:29px;height:1px;background:#ececec"></div><div class="a" style="left:39px;top:468px;width:920px;height:1px;background:#a0a0a0"></div><div class="t" style="left:67.5px;top:456.88px;font-size:9px;color:#000;transform:scaleX(0.868);transform-origin:0 0;">10</div><div class="t" style="left:117.5px;top:456.88px;font-size:9px;color:#000;transform:scaleX(0.868);transform-origin:0 0;">1</div><div class="t" style="left:162.5px;top:456.88px;font-size:9px;color:#000;transform:scaleX(0.868);transform-origin:0 0;">A</div><div class="t" style="left:212px;top:456.88px;font-size:9px;color:#000;transform:scaleX(0.868);transform-origin:0 0;">10</div><div class="t" style="left:252.8px;top:456.88px;font-size:9px;color:#000;transform:scaleX(0.868);transform-origin:0 0;">63641337665609...</div><div class="t" style="left:329.5px;top:456.88px;font-size:9px;color:#000;transform:scaleX(0.868);transform-origin:0 0;">3954103</div><div class="t" style="left:495px;top:456.88px;font-size:9px;color:#000;transform:scaleX(0.868);transform-origin:0 0;">30791</div><div class="t" style="left:560.8px;top:456.88px;font-size:9px;color:#000;transform:scaleX(0.868);transform-origin:0 0;">64.80728134...</div><div class="t" style="left:620.2px;top:456.88px;font-size:9px;color:#000;transform:scaleX(0.868);transform-origin:0 0;">636413376742...</div><div class="t" style="left:688.6px;top:456.88px;font-size:9px;color:#000;transform:scaleX(0.868);transform-origin:0 0;">3957887</div><div class="t" style="left:836.3px;top:456.88px;font-size:9px;color:#000;transform:scaleX(0.868);transform-origin:0 0;">35145</div><div class="t" style="left:874.3px;top:456.88px;font-size:9px;color:#000;transform:scaleX(0.868);transform-origin:0 0;">123.0828906...</div><div class="t" style="left:932.8px;top:456.88px;font-size:9px;color:#000;transform:scaleX(0.868);transform-origin:0 0;">93.287</div><svg class="cb" style="left:47px;top:456px" width="10" height="10" viewBox="0 0 10 10"><rect x="0.5" y="0.5" width="8.5" height="8.5" fill="#fff" stroke="#5a5a5a" stroke-width="1"/><path d="M2 4.7 L4 6.7 L7.7 3" fill="none" stroke="#4a4a4a" stroke-width="1.1"/></svg><svg class="cb" style="left:450px;top:456px" width="10" height="10" viewBox="0 0 10 10"><rect x="0.5" y="0.5" width="8.5" height="8.5" fill="#fff" stroke="#5a5a5a" stroke-width="1"/><path d="M2 4.7 L4 6.7 L7.7 3" fill="none" stroke="#4a4a4a" stroke-width="1.1"/></svg><svg class="cb" style="left:796px;top:456px" width="10" height="10" viewBox="0 0 10 10"><rect x="0.5" y="0.5" width="8.5" height="8.5" fill="#fff" stroke="#5a5a5a" stroke-width="1"/><path d="M2 4.7 L4 6.7 L7.7 3" fill="none" stroke="#4a4a4a" stroke-width="1.1"/></svg><div class="a" style="left:9px;top:482px;width:29px;height:1px;background:#ececec"></div><div class="a" style="left:39px;top:482px;width:920px;height:1px;background:#a0a0a0"></div><div class="t" style="left:67.5px;top:471.88px;font-size:9px;color:#000;transform:scaleX(0.868);transform-origin:0 0;">11</div><div class="t" style="left:117.5px;top:471.88px;font-size:9px;color:#000;transform:scaleX(0.868);transform-origin:0 0;">1</div><div class="t" style="left:162.5px;top:471.88px;font-size:9px;color:#000;transform:scaleX(0.868);transform-origin:0 0;">A</div><div class="t" style="left:212px;top:471.88px;font-size:9px;color:#000;transform:scaleX(0.868);transform-origin:0 0;">11</div><div class="t" style="left:252.8px;top:471.88px;font-size:9px;color:#000;transform:scaleX(0.868);transform-origin:0 0;">63641337667968...</div><div class="t" style="left:329.5px;top:471.88px;font-size:9px;color:#000;transform:scaleX(0.868);transform-origin:0 0;">3955133</div><div class="t" style="left:495px;top:471.88px;font-size:9px;color:#000;transform:scaleX(0.868);transform-origin:0 0;">26248</div><div class="t" style="left:560.8px;top:471.88px;font-size:9px;color:#000;transform:scaleX(0.868);transform-origin:0 0;">78.08438738...</div><div class="t" style="left:620.2px;top:471.88px;font-size:9px;color:#000;transform:scaleX(0.868);transform-origin:0 0;">636413376766...</div><div class="t" style="left:688.6px;top:471.88px;font-size:9px;color:#000;transform:scaleX(0.868);transform-origin:0 0;">3958925</div><div class="t" style="left:836.3px;top:471.88px;font-size:9px;color:#000;transform:scaleX(0.868);transform-origin:0 0;">30402</div><div class="t" style="left:874.3px;top:471.88px;font-size:9px;color:#000;transform:scaleX(0.868);transform-origin:0 0;">107.4664514...</div><div class="t" style="left:932.8px;top:471.88px;font-size:9px;color:#000;transform:scaleX(0.868);transform-origin:0 0;">91.643</div><svg class="cb" style="left:47px;top:471px" width="10" height="10" viewBox="0 0 10 10"><rect x="0.5" y="0.5" width="8.5" height="8.5" fill="#fff" stroke="#5a5a5a" stroke-width="1"/><path d="M2 4.7 L4 6.7 L7.7 3" fill="none" stroke="#4a4a4a" stroke-width="1.1"/></svg><svg class="cb" style="left:450px;top:471px" width="10" height="10" viewBox="0 0 10 10"><rect x="0.5" y="0.5" width="8.5" height="8.5" fill="#fff" stroke="#5a5a5a" stroke-width="1"/><path d="M2 4.7 L4 6.7 L7.7 3" fill="none" stroke="#4a4a4a" stroke-width="1.1"/></svg><svg class="cb" style="left:796px;top:471px" width="10" height="10" viewBox="0 0 10 10"><rect x="0.5" y="0.5" width="8.5" height="8.5" fill="#fff" stroke="#5a5a5a" stroke-width="1"/><path d="M2 4.7 L4 6.7 L7.7 3" fill="none" stroke="#4a4a4a" stroke-width="1.1"/></svg><div class="a" style="left:9px;top:497px;width:29px;height:1px;background:#ececec"></div><div class="a" style="left:39px;top:497px;width:920px;height:1px;background:#a0a0a0"></div><div class="t" style="left:67.5px;top:485.88px;font-size:9px;color:#000;transform:scaleX(0.868);transform-origin:0 0;">12</div><div class="t" style="left:117.5px;top:485.88px;font-size:9px;color:#000;transform:scaleX(0.868);transform-origin:0 0;">1</div><div class="t" style="left:162.5px;top:485.88px;font-size:9px;color:#000;transform:scaleX(0.868);transform-origin:0 0;">A</div><div class="t" style="left:212px;top:485.88px;font-size:9px;color:#000;transform:scaleX(0.868);transform-origin:0 0;">12</div><div class="t" style="left:252.8px;top:485.88px;font-size:9px;color:#000;transform:scaleX(0.868);transform-origin:0 0;">63641337670655...</div><div class="t" style="left:329.5px;top:485.88px;font-size:9px;color:#000;transform:scaleX(0.868);transform-origin:0 0;">3956312</div><div class="t" style="left:495px;top:485.88px;font-size:9px;color:#000;transform:scaleX(0.868);transform-origin:0 0;">28937</div><div class="t" style="left:560.8px;top:485.88px;font-size:9px;color:#000;transform:scaleX(0.868);transform-origin:0 0;">73.86529356...</div><div class="t" style="left:620.2px;top:485.88px;font-size:9px;color:#000;transform:scaleX(0.868);transform-origin:0 0;">636413376792...</div><div class="t" style="left:688.6px;top:485.88px;font-size:9px;color:#000;transform:scaleX(0.868);transform-origin:0 0;">3960068</div><div class="t" style="left:836.3px;top:485.88px;font-size:9px;color:#000;transform:scaleX(0.868);transform-origin:0 0;">33592</div><div class="t" style="left:874.3px;top:485.88px;font-size:9px;color:#000;transform:scaleX(0.868);transform-origin:0 0;">115.4018161...</div><div class="t" style="left:932.8px;top:485.88px;font-size:9px;color:#000;transform:scaleX(0.868);transform-origin:0 0;">94.658</div><svg class="cb" style="left:47px;top:485px" width="10" height="10" viewBox="0 0 10 10"><rect x="0.5" y="0.5" width="8.5" height="8.5" fill="#fff" stroke="#5a5a5a" stroke-width="1"/><path d="M2 4.7 L4 6.7 L7.7 3" fill="none" stroke="#4a4a4a" stroke-width="1.1"/></svg><svg class="cb" style="left:450px;top:485px" width="10" height="10" viewBox="0 0 10 10"><rect x="0.5" y="0.5" width="8.5" height="8.5" fill="#fff" stroke="#5a5a5a" stroke-width="1"/><path d="M2 4.7 L4 6.7 L7.7 3" fill="none" stroke="#4a4a4a" stroke-width="1.1"/></svg><svg class="cb" style="left:796px;top:485px" width="10" height="10" viewBox="0 0 10 10"><rect x="0.5" y="0.5" width="8.5" height="8.5" fill="#fff" stroke="#5a5a5a" stroke-width="1"/><path d="M2 4.7 L4 6.7 L7.7 3" fill="none" stroke="#4a4a4a" stroke-width="1.1"/></svg><div class="a" style="left:9px;top:512px;width:29px;height:1px;background:#ececec"></div><div class="a" style="left:39px;top:512px;width:920px;height:1px;background:#a0a0a0"></div><div class="t" style="left:67.5px;top:500.88px;font-size:9px;color:#000;transform:scaleX(0.868);transform-origin:0 0;">13</div><div class="t" style="left:117.5px;top:500.88px;font-size:9px;color:#000;transform:scaleX(0.868);transform-origin:0 0;">1</div><div class="t" style="left:162.5px;top:500.88px;font-size:9px;color:#000;transform:scaleX(0.868);transform-origin:0 0;">B</div><div class="t" style="left:212px;top:500.88px;font-size:9px;color:#000;transform:scaleX(0.868);transform-origin:0 0;">12</div><div class="t" style="left:252.8px;top:500.88px;font-size:9px;color:#000;transform:scaleX(0.868);transform-origin:0 0;">63641337672297...</div><div class="t" style="left:329.5px;top:500.88px;font-size:9px;color:#000;transform:scaleX(0.868);transform-origin:0 0;">3957031</div><div class="t" style="left:495px;top:500.88px;font-size:9px;color:#000;transform:scaleX(0.868);transform-origin:0 0;">27502</div><div class="t" style="left:560.8px;top:500.88px;font-size:9px;color:#000;transform:scaleX(0.868);transform-origin:0 0;">74.73096502...</div><div class="t" style="left:620.2px;top:500.88px;font-size:9px;color:#000;transform:scaleX(0.868);transform-origin:0 0;">636413376808...</div><div class="t" style="left:688.6px;top:500.88px;font-size:9px;color:#000;transform:scaleX(0.868);transform-origin:0 0;">3960772</div><div class="t" style="left:836.3px;top:500.88px;font-size:9px;color:#000;transform:scaleX(0.868);transform-origin:0 0;">31366</div><div class="t" style="left:874.3px;top:500.88px;font-size:9px;color:#000;transform:scaleX(0.868);transform-origin:0 0;">113.6368377...</div><div class="t" style="left:932.8px;top:500.88px;font-size:9px;color:#000;transform:scaleX(0.868);transform-origin:0 0;">89.427</div><svg class="cb" style="left:47px;top:500px" width="10" height="10" viewBox="0 0 10 10"><rect x="0.5" y="0.5" width="8.5" height="8.5" fill="#fff" stroke="#5a5a5a" stroke-width="1"/><path d="M2 4.7 L4 6.7 L7.7 3" fill="none" stroke="#4a4a4a" stroke-width="1.1"/></svg><svg class="cb" style="left:450px;top:500px" width="10" height="10" viewBox="0 0 10 10"><rect x="0.5" y="0.5" width="8.5" height="8.5" fill="#fff" stroke="#5a5a5a" stroke-width="1"/><path d="M2 4.7 L4 6.7 L7.7 3" fill="none" stroke="#4a4a4a" stroke-width="1.1"/></svg><svg class="cb" style="left:796px;top:500px" width="10" height="10" viewBox="0 0 10 10"><rect x="0.5" y="0.5" width="8.5" height="8.5" fill="#fff" stroke="#5a5a5a" stroke-width="1"/><path d="M2 4.7 L4 6.7 L7.7 3" fill="none" stroke="#4a4a4a" stroke-width="1.1"/></svg><div class="a" style="left:9px;top:526px;width:29px;height:1px;background:#ececec"></div><div class="a" style="left:39px;top:526px;width:920px;height:1px;background:#a0a0a0"></div><div class="t" style="left:67.5px;top:515.88px;font-size:9px;color:#000;transform:scaleX(0.868);transform-origin:0 0;">14</div><div class="t" style="left:117.5px;top:515.88px;font-size:9px;color:#000;transform:scaleX(0.868);transform-origin:0 0;">1</div><div class="t" style="left:162.5px;top:515.88px;font-size:9px;color:#000;transform:scaleX(0.868);transform-origin:0 0;">B</div><div class="t" style="left:212px;top:515.88px;font-size:9px;color:#000;transform:scaleX(0.868);transform-origin:0 0;">11</div><div class="t" style="left:252.8px;top:515.88px;font-size:9px;color:#000;transform:scaleX(0.868);transform-origin:0 0;">63641337673917...</div><div class="t" style="left:329.5px;top:515.88px;font-size:9px;color:#000;transform:scaleX(0.868);transform-origin:0 0;">3957734</div><div class="t" style="left:495px;top:515.88px;font-size:9px;color:#000;transform:scaleX(0.868);transform-origin:0 0;">29420</div><div class="t" style="left:560.8px;top:515.88px;font-size:9px;color:#000;transform:scaleX(0.868);transform-origin:0 0;">71.44337185...</div><div class="t" style="left:620.2px;top:515.88px;font-size:9px;color:#000;transform:scaleX(0.868);transform-origin:0 0;">636413376824...</div><div class="t" style="left:688.6px;top:515.88px;font-size:9px;color:#000;transform:scaleX(0.868);transform-origin:0 0;">3961458</div><div class="t" style="left:836.3px;top:515.88px;font-size:9px;color:#000;transform:scaleX(0.868);transform-origin:0 0;">33316</div><div class="t" style="left:874.3px;top:515.88px;font-size:9px;color:#000;transform:scaleX(0.868);transform-origin:0 0;">120.6565400...</div><div class="t" style="left:932.8px;top:515.88px;font-size:9px;color:#000;transform:scaleX(0.868);transform-origin:0 0;">89.524</div><svg class="cb" style="left:47px;top:515px" width="10" height="10" viewBox="0 0 10 10"><rect x="0.5" y="0.5" width="8.5" height="8.5" fill="#fff" stroke="#5a5a5a" stroke-width="1"/><path d="M2 4.7 L4 6.7 L7.7 3" fill="none" stroke="#4a4a4a" stroke-width="1.1"/></svg><svg class="cb" style="left:450px;top:515px" width="10" height="10" viewBox="0 0 10 10"><rect x="0.5" y="0.5" width="8.5" height="8.5" fill="#fff" stroke="#5a5a5a" stroke-width="1"/><path d="M2 4.7 L4 6.7 L7.7 3" fill="none" stroke="#4a4a4a" stroke-width="1.1"/></svg><svg class="cb" style="left:796px;top:515px" width="10" height="10" viewBox="0 0 10 10"><rect x="0.5" y="0.5" width="8.5" height="8.5" fill="#fff" stroke="#5a5a5a" stroke-width="1"/><path d="M2 4.7 L4 6.7 L7.7 3" fill="none" stroke="#4a4a4a" stroke-width="1.1"/></svg><div class="a" style="left:9px;top:541px;width:29px;height:1px;background:#ececec"></div><div class="a" style="left:39px;top:541px;width:920px;height:1px;background:#a0a0a0"></div><div class="t" style="left:67.5px;top:529.88px;font-size:9px;color:#000;transform:scaleX(0.868);transform-origin:0 0;">15</div><div class="t" style="left:117.5px;top:529.88px;font-size:9px;color:#000;transform:scaleX(0.868);transform-origin:0 0;">1</div><div class="t" style="left:162.5px;top:529.88px;font-size:9px;color:#000;transform:scaleX(0.868);transform-origin:0 0;">B</div><div class="t" style="left:212px;top:529.88px;font-size:9px;color:#000;transform:scaleX(0.868);transform-origin:0 0;">10</div><div class="t" style="left:252.8px;top:529.88px;font-size:9px;color:#000;transform:scaleX(0.868);transform-origin:0 0;">63641337676444...</div><div class="t" style="left:329.5px;top:529.88px;font-size:9px;color:#000;transform:scaleX(0.868);transform-origin:0 0;">3958831</div><div class="t" style="left:495px;top:529.88px;font-size:9px;color:#000;transform:scaleX(0.868);transform-origin:0 0;">26929</div><div class="t" style="left:560.8px;top:529.88px;font-size:9px;color:#000;transform:scaleX(0.868);transform-origin:0 0;">71.79895280...</div><div class="t" style="left:620.2px;top:529.88px;font-size:9px;color:#000;transform:scaleX(0.868);transform-origin:0 0;">636413376849...</div><div class="t" style="left:688.6px;top:529.88px;font-size:9px;color:#000;transform:scaleX(0.868);transform-origin:0 0;">3962566</div><div class="t" style="left:836.3px;top:529.88px;font-size:9px;color:#000;transform:scaleX(0.868);transform-origin:0 0;">31234</div><div class="t" style="left:874.3px;top:529.88px;font-size:9px;color:#000;transform:scaleX(0.868);transform-origin:0 0;">111.8940342...</div><div class="t" style="left:932.8px;top:529.88px;font-size:9px;color:#000;transform:scaleX(0.868);transform-origin:0 0;">90.498</div><svg class="cb" style="left:47px;top:529px" width="10" height="10" viewBox="0 0 10 10"><rect x="0.5" y="0.5" width="8.5" height="8.5" fill="#fff" stroke="#5a5a5a" stroke-width="1"/><path d="M2 4.7 L4 6.7 L7.7 3" fill="none" stroke="#4a4a4a" stroke-width="1.1"/></svg><svg class="cb" style="left:450px;top:529px" width="10" height="10" viewBox="0 0 10 10"><rect x="0.5" y="0.5" width="8.5" height="8.5" fill="#fff" stroke="#5a5a5a" stroke-width="1"/><path d="M2 4.7 L4 6.7 L7.7 3" fill="none" stroke="#4a4a4a" stroke-width="1.1"/></svg><svg class="cb" style="left:796px;top:529px" width="10" height="10" viewBox="0 0 10 10"><rect x="0.5" y="0.5" width="8.5" height="8.5" fill="#fff" stroke="#5a5a5a" stroke-width="1"/><path d="M2 4.7 L4 6.7 L7.7 3" fill="none" stroke="#4a4a4a" stroke-width="1.1"/></svg><div class="a" style="left:9px;top:555px;width:29px;height:1px;background:#ececec"></div><div class="a" style="left:39px;top:555px;width:920px;height:1px;background:#a0a0a0"></div><div class="t" style="left:67.5px;top:544.88px;font-size:9px;color:#000;transform:scaleX(0.868);transform-origin:0 0;">16</div><div class="t" style="left:117.5px;top:544.88px;font-size:9px;color:#000;transform:scaleX(0.868);transform-origin:0 0;">1</div><div class="t" style="left:162.5px;top:544.88px;font-size:9px;color:#000;transform:scaleX(0.868);transform-origin:0 0;">B</div><div class="t" style="left:212px;top:544.88px;font-size:9px;color:#000;transform:scaleX(0.868);transform-origin:0 0;">9</div><div class="t" style="left:252.8px;top:544.88px;font-size:9px;color:#000;transform:scaleX(0.868);transform-origin:0 0;">63641337678820...</div><div class="t" style="left:329.5px;top:544.88px;font-size:9px;color:#000;transform:scaleX(0.868);transform-origin:0 0;">3959876</div><div class="t" style="left:495px;top:544.88px;font-size:9px;color:#000;transform:scaleX(0.868);transform-origin:0 0;">27877</div><div class="t" style="left:560.8px;top:544.88px;font-size:9px;color:#000;transform:scaleX(0.868);transform-origin:0 0;">78.20726763...</div><div class="t" style="left:620.2px;top:544.88px;font-size:9px;color:#000;transform:scaleX(0.868);transform-origin:0 0;">636413376873...</div><div class="t" style="left:688.6px;top:544.88px;font-size:9px;color:#000;transform:scaleX(0.868);transform-origin:0 0;">3963616</div><div class="t" style="left:836.3px;top:544.88px;font-size:9px;color:#000;transform:scaleX(0.868);transform-origin:0 0;">32230</div><div class="t" style="left:874.3px;top:544.88px;font-size:9px;color:#000;transform:scaleX(0.868);transform-origin:0 0;">112.0578370...</div><div class="t" style="left:932.8px;top:544.88px;font-size:9px;color:#000;transform:scaleX(0.868);transform-origin:0 0;">93.535</div><svg class="cb" style="left:47px;top:544px" width="10" height="10" viewBox="0 0 10 10"><rect x="0.5" y="0.5" width="8.5" height="8.5" fill="#fff" stroke="#5a5a5a" stroke-width="1"/><path d="M2 4.7 L4 6.7 L7.7 3" fill="none" stroke="#4a4a4a" stroke-width="1.1"/></svg><svg class="cb" style="left:450px;top:544px" width="10" height="10" viewBox="0 0 10 10"><rect x="0.5" y="0.5" width="8.5" height="8.5" fill="#fff" stroke="#5a5a5a" stroke-width="1"/><path d="M2 4.7 L4 6.7 L7.7 3" fill="none" stroke="#4a4a4a" stroke-width="1.1"/></svg><svg class="cb" style="left:796px;top:544px" width="10" height="10" viewBox="0 0 10 10"><rect x="0.5" y="0.5" width="8.5" height="8.5" fill="#fff" stroke="#5a5a5a" stroke-width="1"/><path d="M2 4.7 L4 6.7 L7.7 3" fill="none" stroke="#4a4a4a" stroke-width="1.1"/></svg><div class="a" style="left:9px;top:570px;width:29px;height:1px;background:#ececec"></div><div class="a" style="left:39px;top:570px;width:920px;height:1px;background:#a0a0a0"></div><div class="t" style="left:67.5px;top:558.88px;font-size:9px;color:#000;transform:scaleX(0.868);transform-origin:0 0;">17</div><div class="t" style="left:117.5px;top:558.88px;font-size:9px;color:#000;transform:scaleX(0.868);transform-origin:0 0;">1</div><div class="t" style="left:162.5px;top:558.88px;font-size:9px;color:#000;transform:scaleX(0.868);transform-origin:0 0;">B</div><div class="t" style="left:212px;top:558.88px;font-size:9px;color:#000;transform:scaleX(0.868);transform-origin:0 0;">8</div><div class="t" style="left:252.8px;top:558.88px;font-size:9px;color:#000;transform:scaleX(0.868);transform-origin:0 0;">63641337680508...</div><div class="t" style="left:329.5px;top:558.88px;font-size:9px;color:#000;transform:scaleX(0.868);transform-origin:0 0;">3960611</div><div class="t" style="left:495px;top:558.88px;font-size:9px;color:#000;transform:scaleX(0.868);transform-origin:0 0;">30316</div><div class="t" style="left:560.8px;top:558.88px;font-size:9px;color:#000;transform:scaleX(0.868);transform-origin:0 0;">74.26764744...</div><div class="t" style="left:620.2px;top:558.88px;font-size:9px;color:#000;transform:scaleX(0.868);transform-origin:0 0;">636413376891...</div><div class="t" style="left:688.6px;top:558.88px;font-size:9px;color:#000;transform:scaleX(0.868);transform-origin:0 0;">3964392</div><div class="t" style="left:836.3px;top:558.88px;font-size:9px;color:#000;transform:scaleX(0.868);transform-origin:0 0;">35515</div><div class="t" style="left:874.3px;top:558.88px;font-size:9px;color:#000;transform:scaleX(0.868);transform-origin:0 0;">120.8309868...</div><div class="t" style="left:932.8px;top:558.88px;font-size:9px;color:#000;transform:scaleX(0.868);transform-origin:0 0;">96.105</div><svg class="cb" style="left:47px;top:558px" width="10" height="10" viewBox="0 0 10 10"><rect x="0.5" y="0.5" width="8.5" height="8.5" fill="#fff" stroke="#5a5a5a" stroke-width="1"/><path d="M2 4.7 L4 6.7 L7.7 3" fill="none" stroke="#4a4a4a" stroke-width="1.1"/></svg><svg class="cb" style="left:450px;top:558px" width="10" height="10" viewBox="0 0 10 10"><rect x="0.5" y="0.5" width="8.5" height="8.5" fill="#fff" stroke="#5a5a5a" stroke-width="1"/><path d="M2 4.7 L4 6.7 L7.7 3" fill="none" stroke="#4a4a4a" stroke-width="1.1"/></svg><svg class="cb" style="left:796px;top:558px" width="10" height="10" viewBox="0 0 10 10"><rect x="0.5" y="0.5" width="8.5" height="8.5" fill="#fff" stroke="#5a5a5a" stroke-width="1"/><path d="M2 4.7 L4 6.7 L7.7 3" fill="none" stroke="#4a4a4a" stroke-width="1.1"/></svg><div class="a" style="left:9px;top:584px;width:29px;height:1px;background:#ececec"></div><div class="a" style="left:39px;top:584px;width:920px;height:1px;background:#a0a0a0"></div><div class="t" style="left:67.5px;top:573.88px;font-size:9px;color:#000;transform:scaleX(0.868);transform-origin:0 0;">18</div><div class="t" style="left:117.5px;top:573.88px;font-size:9px;color:#000;transform:scaleX(0.868);transform-origin:0 0;">1</div><div class="t" style="left:162.5px;top:573.88px;font-size:9px;color:#000;transform:scaleX(0.868);transform-origin:0 0;">B</div><div class="t" style="left:212px;top:573.88px;font-size:9px;color:#000;transform:scaleX(0.868);transform-origin:0 0;">7</div><div class="t" style="left:252.8px;top:573.88px;font-size:9px;color:#000;transform:scaleX(0.868);transform-origin:0 0;">63641337682827...</div><div class="t" style="left:329.5px;top:573.88px;font-size:9px;color:#000;transform:scaleX(0.868);transform-origin:0 0;">3961625</div><div class="t" style="left:495px;top:573.88px;font-size:9px;color:#000;transform:scaleX(0.868);transform-origin:0 0;">30973</div><div class="t" style="left:560.8px;top:573.88px;font-size:9px;color:#000;transform:scaleX(0.868);transform-origin:0 0;">72.24547186...</div><div class="t" style="left:620.2px;top:573.88px;font-size:9px;color:#000;transform:scaleX(0.868);transform-origin:0 0;">636413376913...</div><div class="t" style="left:688.6px;top:573.88px;font-size:9px;color:#000;transform:scaleX(0.868);transform-origin:0 0;">3965363</div><div class="t" style="left:836.3px;top:573.88px;font-size:9px;color:#000;transform:scaleX(0.868);transform-origin:0 0;">35827</div><div class="t" style="left:874.3px;top:573.88px;font-size:9px;color:#000;transform:scaleX(0.868);transform-origin:0 0;">123.1506447...</div><div class="t" style="left:932.8px;top:573.88px;font-size:9px;color:#000;transform:scaleX(0.868);transform-origin:0 0;">95.547</div><svg class="cb" style="left:47px;top:573px" width="10" height="10" viewBox="0 0 10 10"><rect x="0.5" y="0.5" width="8.5" height="8.5" fill="#fff" stroke="#5a5a5a" stroke-width="1"/><path d="M2 4.7 L4 6.7 L7.7 3" fill="none" stroke="#4a4a4a" stroke-width="1.1"/></svg><svg class="cb" style="left:450px;top:573px" width="10" height="10" viewBox="0 0 10 10"><rect x="0.5" y="0.5" width="8.5" height="8.5" fill="#fff" stroke="#5a5a5a" stroke-width="1"/><path d="M2 4.7 L4 6.7 L7.7 3" fill="none" stroke="#4a4a4a" stroke-width="1.1"/></svg><svg class="cb" style="left:796px;top:573px" width="10" height="10" viewBox="0 0 10 10"><rect x="0.5" y="0.5" width="8.5" height="8.5" fill="#fff" stroke="#5a5a5a" stroke-width="1"/><path d="M2 4.7 L4 6.7 L7.7 3" fill="none" stroke="#4a4a4a" stroke-width="1.1"/></svg><div class="a" style="left:9px;top:599px;width:29px;height:1px;background:#ececec"></div><div class="a" style="left:39px;top:599px;width:920px;height:1px;background:#a0a0a0"></div><div class="t" style="left:67.5px;top:587.88px;font-size:9px;color:#000;transform:scaleX(0.868);transform-origin:0 0;">19</div><div class="t" style="left:117.5px;top:587.88px;font-size:9px;color:#000;transform:scaleX(0.868);transform-origin:0 0;">1</div><div class="t" style="left:162.5px;top:587.88px;font-size:9px;color:#000;transform:scaleX(0.868);transform-origin:0 0;">B</div><div class="t" style="left:212px;top:587.88px;font-size:9px;color:#000;transform:scaleX(0.868);transform-origin:0 0;">6</div><div class="t" style="left:252.8px;top:587.88px;font-size:9px;color:#000;transform:scaleX(0.868);transform-origin:0 0;">63641337684539...</div><div class="t" style="left:329.5px;top:587.88px;font-size:9px;color:#000;transform:scaleX(0.868);transform-origin:0 0;">3962367</div><div class="t" style="left:495px;top:587.88px;font-size:9px;color:#000;transform:scaleX(0.868);transform-origin:0 0;">34644</div><div class="t" style="left:560.8px;top:587.88px;font-size:9px;color:#000;transform:scaleX(0.868);transform-origin:0 0;">66.76125736...</div><div class="t" style="left:620.2px;top:587.88px;font-size:9px;color:#000;transform:scaleX(0.868);transform-origin:0 0;">636413376931...</div><div class="t" style="left:688.6px;top:587.88px;font-size:9px;color:#000;transform:scaleX(0.868);transform-origin:0 0;">3966148</div><div class="t" style="left:836.3px;top:587.88px;font-size:9px;color:#000;transform:scaleX(0.868);transform-origin:0 0;">39557</div><div class="t" style="left:874.3px;top:587.88px;font-size:9px;color:#000;transform:scaleX(0.868);transform-origin:0 0;">129.7846599...</div><div class="t" style="left:932.8px;top:587.88px;font-size:9px;color:#000;transform:scaleX(0.868);transform-origin:0 0;">99.853</div><svg class="cb" style="left:47px;top:587px" width="10" height="10" viewBox="0 0 10 10"><rect x="0.5" y="0.5" width="8.5" height="8.5" fill="#fff" stroke="#5a5a5a" stroke-width="1"/><path d="M2 4.7 L4 6.7 L7.7 3" fill="none" stroke="#4a4a4a" stroke-width="1.1"/></svg><svg class="cb" style="left:450px;top:587px" width="10" height="10" viewBox="0 0 10 10"><rect x="0.5" y="0.5" width="8.5" height="8.5" fill="#fff" stroke="#5a5a5a" stroke-width="1"/><path d="M2 4.7 L4 6.7 L7.7 3" fill="none" stroke="#4a4a4a" stroke-width="1.1"/></svg><svg class="cb" style="left:796px;top:587px" width="10" height="10" viewBox="0 0 10 10"><rect x="0.5" y="0.5" width="8.5" height="8.5" fill="#fff" stroke="#5a5a5a" stroke-width="1"/><path d="M2 4.7 L4 6.7 L7.7 3" fill="none" stroke="#4a4a4a" stroke-width="1.1"/></svg><div class="a" style="left:9px;top:614px;width:29px;height:1px;background:#ececec"></div><div class="a" style="left:39px;top:614px;width:920px;height:1px;background:#a0a0a0"></div><div class="t" style="left:67.5px;top:602.88px;font-size:9px;color:#000;transform:scaleX(0.868);transform-origin:0 0;">20</div><div class="t" style="left:117.5px;top:602.88px;font-size:9px;color:#000;transform:scaleX(0.868);transform-origin:0 0;">1</div><div class="t" style="left:162.5px;top:602.88px;font-size:9px;color:#000;transform:scaleX(0.868);transform-origin:0 0;">B</div><div class="t" style="left:212px;top:602.88px;font-size:9px;color:#000;transform:scaleX(0.868);transform-origin:0 0;">5</div><div class="t" style="left:252.8px;top:602.88px;font-size:9px;color:#000;transform:scaleX(0.868);transform-origin:0 0;">63641337686510...</div><div class="t" style="left:329.5px;top:602.88px;font-size:9px;color:#000;transform:scaleX(0.868);transform-origin:0 0;">3963229</div><div class="t" style="left:495px;top:602.88px;font-size:9px;color:#000;transform:scaleX(0.868);transform-origin:0 0;">31098</div><div class="t" style="left:560.8px;top:602.88px;font-size:9px;color:#000;transform:scaleX(0.868);transform-origin:0 0;">66.47562544...</div><div class="t" style="left:620.2px;top:602.88px;font-size:9px;color:#000;transform:scaleX(0.868);transform-origin:0 0;">636413376951...</div><div class="t" style="left:688.6px;top:602.88px;font-size:9px;color:#000;transform:scaleX(0.868);transform-origin:0 0;">3967010</div><div class="t" style="left:836.3px;top:602.88px;font-size:9px;color:#000;transform:scaleX(0.868);transform-origin:0 0;">36483</div><div class="t" style="left:874.3px;top:602.88px;font-size:9px;color:#000;transform:scaleX(0.868);transform-origin:0 0;">114.2399686...</div><div class="t" style="left:932.8px;top:602.88px;font-size:9px;color:#000;transform:scaleX(0.868);transform-origin:0 0;">105.39</div><svg class="cb" style="left:47px;top:602px" width="10" height="10" viewBox="0 0 10 10"><rect x="0.5" y="0.5" width="8.5" height="8.5" fill="#fff" stroke="#5a5a5a" stroke-width="1"/><path d="M2 4.7 L4 6.7 L7.7 3" fill="none" stroke="#4a4a4a" stroke-width="1.1"/></svg><svg class="cb" style="left:450px;top:602px" width="10" height="10" viewBox="0 0 10 10"><rect x="0.5" y="0.5" width="8.5" height="8.5" fill="#fff" stroke="#5a5a5a" stroke-width="1"/><path d="M2 4.7 L4 6.7 L7.7 3" fill="none" stroke="#4a4a4a" stroke-width="1.1"/></svg><svg class="cb" style="left:796px;top:602px" width="10" height="10" viewBox="0 0 10 10"><rect x="0.5" y="0.5" width="8.5" height="8.5" fill="#fff" stroke="#5a5a5a" stroke-width="1"/><path d="M2 4.7 L4 6.7 L7.7 3" fill="none" stroke="#4a4a4a" stroke-width="1.1"/></svg><div class="a" style="left:9px;top:628px;width:29px;height:1px;background:#ececec"></div><div class="a" style="left:39px;top:628px;width:920px;height:1px;background:#a0a0a0"></div><div class="t" style="left:67.5px;top:617.88px;font-size:9px;color:#000;transform:scaleX(0.868);transform-origin:0 0;">21</div><div class="t" style="left:117.5px;top:617.88px;font-size:9px;color:#000;transform:scaleX(0.868);transform-origin:0 0;">1</div><div class="t" style="left:162.5px;top:617.88px;font-size:9px;color:#000;transform:scaleX(0.868);transform-origin:0 0;">B</div><div class="t" style="left:212px;top:617.88px;font-size:9px;color:#000;transform:scaleX(0.868);transform-origin:0 0;">4</div><div class="t" style="left:252.8px;top:617.88px;font-size:9px;color:#000;transform:scaleX(0.868);transform-origin:0 0;">63641337688819...</div><div class="t" style="left:329.5px;top:617.88px;font-size:9px;color:#000;transform:scaleX(0.868);transform-origin:0 0;">3964239</div><div class="t" style="left:495px;top:617.88px;font-size:9px;color:#000;transform:scaleX(0.868);transform-origin:0 0;">31390</div><div class="t" style="left:560.8px;top:617.88px;font-size:9px;color:#000;transform:scaleX(0.868);transform-origin:0 0;">74.65950939...</div><div class="t" style="left:620.2px;top:617.88px;font-size:9px;color:#000;transform:scaleX(0.868);transform-origin:0 0;">636413376973...</div><div class="t" style="left:688.6px;top:617.88px;font-size:9px;color:#000;transform:scaleX(0.868);transform-origin:0 0;">3967976</div><div class="t" style="left:836.3px;top:617.88px;font-size:9px;color:#000;transform:scaleX(0.868);transform-origin:0 0;">36308</div><div class="t" style="left:874.3px;top:617.88px;font-size:9px;color:#000;transform:scaleX(0.868);transform-origin:0 0;">124.9920092...</div><div class="t" style="left:932.8px;top:617.88px;font-size:9px;color:#000;transform:scaleX(0.868);transform-origin:0 0;">95.668</div><svg class="cb" style="left:47px;top:617px" width="10" height="10" viewBox="0 0 10 10"><rect x="0.5" y="0.5" width="8.5" height="8.5" fill="#fff" stroke="#5a5a5a" stroke-width="1"/><path d="M2 4.7 L4 6.7 L7.7 3" fill="none" stroke="#4a4a4a" stroke-width="1.1"/></svg><svg class="cb" style="left:450px;top:617px" width="10" height="10" viewBox="0 0 10 10"><rect x="0.5" y="0.5" width="8.5" height="8.5" fill="#fff" stroke="#5a5a5a" stroke-width="1"/><path d="M2 4.7 L4 6.7 L7.7 3" fill="none" stroke="#4a4a4a" stroke-width="1.1"/></svg><svg class="cb" style="left:796px;top:617px" width="10" height="10" viewBox="0 0 10 10"><rect x="0.5" y="0.5" width="8.5" height="8.5" fill="#fff" stroke="#5a5a5a" stroke-width="1"/><path d="M2 4.7 L4 6.7 L7.7 3" fill="none" stroke="#4a4a4a" stroke-width="1.1"/></svg><div class="a" style="left:9px;top:643px;width:29px;height:1px;background:#ececec"></div><div class="a" style="left:39px;top:643px;width:920px;height:1px;background:#a0a0a0"></div><div class="t" style="left:67.5px;top:631.88px;font-size:9px;color:#000;transform:scaleX(0.868);transform-origin:0 0;">22</div><div class="t" style="left:117.5px;top:631.88px;font-size:9px;color:#000;transform:scaleX(0.868);transform-origin:0 0;">1</div><div class="t" style="left:162.5px;top:631.88px;font-size:9px;color:#000;transform:scaleX(0.868);transform-origin:0 0;">B</div><div class="t" style="left:212px;top:631.88px;font-size:9px;color:#000;transform:scaleX(0.868);transform-origin:0 0;">3</div><div class="t" style="left:252.8px;top:631.88px;font-size:9px;color:#000;transform:scaleX(0.868);transform-origin:0 0;">63641337690470...</div><div class="t" style="left:329.5px;top:631.88px;font-size:9px;color:#000;transform:scaleX(0.868);transform-origin:0 0;">3964964</div><div class="t" style="left:495px;top:631.88px;font-size:9px;color:#000;transform:scaleX(0.868);transform-origin:0 0;">29745</div><div class="t" style="left:560.8px;top:631.88px;font-size:9px;color:#000;transform:scaleX(0.868);transform-origin:0 0;">71.28384602...</div><div class="t" style="left:620.2px;top:631.88px;font-size:9px;color:#000;transform:scaleX(0.868);transform-origin:0 0;">636413376989...</div><div class="t" style="left:688.6px;top:631.88px;font-size:9px;color:#000;transform:scaleX(0.868);transform-origin:0 0;">3968687</div><div class="t" style="left:836.3px;top:631.88px;font-size:9px;color:#000;transform:scaleX(0.868);transform-origin:0 0;">34026</div><div class="t" style="left:874.3px;top:631.88px;font-size:9px;color:#000;transform:scaleX(0.868);transform-origin:0 0;">120.1048617...</div><div class="t" style="left:932.8px;top:631.88px;font-size:9px;color:#000;transform:scaleX(0.868);transform-origin:0 0;">92.469</div><svg class="cb" style="left:47px;top:631px" width="10" height="10" viewBox="0 0 10 10"><rect x="0.5" y="0.5" width="8.5" height="8.5" fill="#fff" stroke="#5a5a5a" stroke-width="1"/><path d="M2 4.7 L4 6.7 L7.7 3" fill="none" stroke="#4a4a4a" stroke-width="1.1"/></svg><svg class="cb" style="left:450px;top:631px" width="10" height="10" viewBox="0 0 10 10"><rect x="0.5" y="0.5" width="8.5" height="8.5" fill="#fff" stroke="#5a5a5a" stroke-width="1"/><path d="M2 4.7 L4 6.7 L7.7 3" fill="none" stroke="#4a4a4a" stroke-width="1.1"/></svg><svg class="cb" style="left:796px;top:631px" width="10" height="10" viewBox="0 0 10 10"><rect x="0.5" y="0.5" width="8.5" height="8.5" fill="#fff" stroke="#5a5a5a" stroke-width="1"/><path d="M2 4.7 L4 6.7 L7.7 3" fill="none" stroke="#4a4a4a" stroke-width="1.1"/></svg><div class="a" style="left:9px;top:657px;width:29px;height:1px;background:#ececec"></div><div class="a" style="left:39px;top:657px;width:920px;height:1px;background:#a0a0a0"></div><div class="t" style="left:67.5px;top:646.88px;font-size:9px;color:#000;transform:scaleX(0.868);transform-origin:0 0;">23</div><div class="t" style="left:117.5px;top:646.88px;font-size:9px;color:#000;transform:scaleX(0.868);transform-origin:0 0;">1</div><div class="t" style="left:162.5px;top:646.88px;font-size:9px;color:#000;transform:scaleX(0.868);transform-origin:0 0;">B</div><div class="t" style="left:212px;top:646.88px;font-size:9px;color:#000;transform:scaleX(0.868);transform-origin:0 0;">2</div><div class="t" style="left:252.8px;top:646.88px;font-size:9px;color:#000;transform:scaleX(0.868);transform-origin:0 0;">63641337696056...</div><div class="t" style="left:329.5px;top:646.88px;font-size:9px;color:#000;transform:scaleX(0.868);transform-origin:0 0;">3967398</div><div class="t" style="left:495px;top:646.88px;font-size:9px;color:#000;transform:scaleX(0.868);transform-origin:0 0;">28323</div><div class="t" style="left:560.8px;top:646.88px;font-size:9px;color:#000;transform:scaleX(0.868);transform-origin:0 0;">73.59167461...</div><div class="t" style="left:620.2px;top:646.88px;font-size:9px;color:#000;transform:scaleX(0.868);transform-origin:0 0;">636413377047...</div><div class="t" style="left:688.6px;top:646.88px;font-size:9px;color:#000;transform:scaleX(0.868);transform-origin:0 0;">3971178</div><div class="t" style="left:836.3px;top:646.88px;font-size:9px;color:#000;transform:scaleX(0.868);transform-origin:0 0;">32878</div><div class="t" style="left:874.3px;top:646.88px;font-size:9px;color:#000;transform:scaleX(0.868);transform-origin:0 0;">114.8496347...</div><div class="t" style="left:932.8px;top:646.88px;font-size:9px;color:#000;transform:scaleX(0.868);transform-origin:0 0;">92.474</div><svg class="cb" style="left:47px;top:646px" width="10" height="10" viewBox="0 0 10 10"><rect x="0.5" y="0.5" width="8.5" height="8.5" fill="#fff" stroke="#5a5a5a" stroke-width="1"/><path d="M2 4.7 L4 6.7 L7.7 3" fill="none" stroke="#4a4a4a" stroke-width="1.1"/></svg><svg class="cb" style="left:450px;top:646px" width="10" height="10" viewBox="0 0 10 10"><rect x="0.5" y="0.5" width="8.5" height="8.5" fill="#fff" stroke="#5a5a5a" stroke-width="1"/><path d="M2 4.7 L4 6.7 L7.7 3" fill="none" stroke="#4a4a4a" stroke-width="1.1"/></svg><svg class="cb" style="left:796px;top:646px" width="10" height="10" viewBox="0 0 10 10"><rect x="0.5" y="0.5" width="8.5" height="8.5" fill="#fff" stroke="#5a5a5a" stroke-width="1"/><path d="M2 4.7 L4 6.7 L7.7 3" fill="none" stroke="#4a4a4a" stroke-width="1.1"/></svg><div class="a" style="left:9px;top:672px;width:29px;height:1px;background:#ececec"></div><div class="a" style="left:39px;top:672px;width:920px;height:1px;background:#a0a0a0"></div><div class="t" style="left:67.5px;top:660.88px;font-size:9px;color:#000;transform:scaleX(0.868);transform-origin:0 0;">24</div><div class="t" style="left:117.5px;top:660.88px;font-size:9px;color:#000;transform:scaleX(0.868);transform-origin:0 0;">1</div><div class="t" style="left:162.5px;top:660.88px;font-size:9px;color:#000;transform:scaleX(0.868);transform-origin:0 0;">B</div><div class="t" style="left:212px;top:660.88px;font-size:9px;color:#000;transform:scaleX(0.868);transform-origin:0 0;">1</div><div class="t" style="left:252.8px;top:660.88px;font-size:9px;color:#000;transform:scaleX(0.868);transform-origin:0 0;">63641337697089...</div><div class="t" style="left:329.5px;top:660.88px;font-size:9px;color:#000;transform:scaleX(0.868);transform-origin:0 0;">3967851</div><div class="t" style="left:495px;top:660.88px;font-size:9px;color:#000;transform:scaleX(0.868);transform-origin:0 0;">31233</div><div class="t" style="left:560.8px;top:660.88px;font-size:9px;color:#000;transform:scaleX(0.868);transform-origin:0 0;">65.87324304...</div><div class="t" style="left:620.2px;top:660.88px;font-size:9px;color:#000;transform:scaleX(0.868);transform-origin:0 0;">636413377057...</div><div class="t" style="left:688.6px;top:660.88px;font-size:9px;color:#000;transform:scaleX(0.868);transform-origin:0 0;">3971623</div><div class="t" style="left:836.3px;top:660.88px;font-size:9px;color:#000;transform:scaleX(0.868);transform-origin:0 0;">36251</div><div class="t" style="left:874.3px;top:660.88px;font-size:9px;color:#000;transform:scaleX(0.868);transform-origin:0 0;">124.5448866...</div><div class="t" style="left:932.8px;top:660.88px;font-size:9px;color:#000;transform:scaleX(0.868);transform-origin:0 0;">94.465</div><svg class="cb" style="left:47px;top:660px" width="10" height="10" viewBox="0 0 10 10"><rect x="0.5" y="0.5" width="8.5" height="8.5" fill="#fff" stroke="#5a5a5a" stroke-width="1"/><path d="M2 4.7 L4 6.7 L7.7 3" fill="none" stroke="#4a4a4a" stroke-width="1.1"/></svg><svg class="cb" style="left:450px;top:660px" width="10" height="10" viewBox="0 0 10 10"><rect x="0.5" y="0.5" width="8.5" height="8.5" fill="#fff" stroke="#5a5a5a" stroke-width="1"/><path d="M2 4.7 L4 6.7 L7.7 3" fill="none" stroke="#4a4a4a" stroke-width="1.1"/></svg><svg class="cb" style="left:796px;top:660px" width="10" height="10" viewBox="0 0 10 10"><rect x="0.5" y="0.5" width="8.5" height="8.5" fill="#fff" stroke="#5a5a5a" stroke-width="1"/><path d="M2 4.7 L4 6.7 L7.7 3" fill="none" stroke="#4a4a4a" stroke-width="1.1"/></svg><div class="a" style="left:9px;top:687px;width:29px;height:1px;background:#ececec"></div><div class="a" style="left:39px;top:687px;width:920px;height:1px;background:#a0a0a0"></div><div class="t" style="left:67.5px;top:675.88px;font-size:9px;color:#000;transform:scaleX(0.868);transform-origin:0 0;">25</div><div class="t" style="left:117.5px;top:675.88px;font-size:9px;color:#000;transform:scaleX(0.868);transform-origin:0 0;">1</div><div class="t" style="left:162.5px;top:675.88px;font-size:9px;color:#000;transform:scaleX(0.868);transform-origin:0 0;">C</div><div class="t" style="left:212px;top:675.88px;font-size:9px;color:#000;transform:scaleX(0.868);transform-origin:0 0;">1</div><div class="t" style="left:252.8px;top:675.88px;font-size:9px;color:#000;transform:scaleX(0.868);transform-origin:0 0;">63641337698751...</div><div class="t" style="left:329.5px;top:675.88px;font-size:9px;color:#000;transform:scaleX(0.868);transform-origin:0 0;">3968580</div><div class="t" style="left:495px;top:675.88px;font-size:9px;color:#000;transform:scaleX(0.868);transform-origin:0 0;">29789</div><div class="t" style="left:560.8px;top:675.88px;font-size:9px;color:#000;transform:scaleX(0.868);transform-origin:0 0;">77.86612507...</div><div class="t" style="left:620.2px;top:675.88px;font-size:9px;color:#000;transform:scaleX(0.868);transform-origin:0 0;">636413377073...</div><div class="t" style="left:688.6px;top:675.88px;font-size:9px;color:#000;transform:scaleX(0.868);transform-origin:0 0;">3972319</div><div class="t" style="left:836.3px;top:675.88px;font-size:9px;color:#000;transform:scaleX(0.868);transform-origin:0 0;">33871</div><div class="t" style="left:874.3px;top:675.88px;font-size:9px;color:#000;transform:scaleX(0.868);transform-origin:0 0;">111.3746160...</div><div class="t" style="left:932.8px;top:675.88px;font-size:9px;color:#000;transform:scaleX(0.868);transform-origin:0 0;">99.079</div><svg class="cb" style="left:47px;top:675px" width="10" height="10" viewBox="0 0 10 10"><rect x="0.5" y="0.5" width="8.5" height="8.5" fill="#fff" stroke="#5a5a5a" stroke-width="1"/><path d="M2 4.7 L4 6.7 L7.7 3" fill="none" stroke="#4a4a4a" stroke-width="1.1"/></svg><svg class="cb" style="left:450px;top:675px" width="10" height="10" viewBox="0 0 10 10"><rect x="0.5" y="0.5" width="8.5" height="8.5" fill="#fff" stroke="#5a5a5a" stroke-width="1"/><path d="M2 4.7 L4 6.7 L7.7 3" fill="none" stroke="#4a4a4a" stroke-width="1.1"/></svg><svg class="cb" style="left:796px;top:675px" width="10" height="10" viewBox="0 0 10 10"><rect x="0.5" y="0.5" width="8.5" height="8.5" fill="#fff" stroke="#5a5a5a" stroke-width="1"/><path d="M2 4.7 L4 6.7 L7.7 3" fill="none" stroke="#4a4a4a" stroke-width="1.1"/></svg><div class="t" style="left:67.5px;top:690.88px;font-size:9px;color:#000;transform:scaleX(0.868);transform-origin:0 0;">26</div><div class="t" style="left:117.5px;top:690.88px;font-size:9px;color:#000;transform:scaleX(0.868);transform-origin:0 0;">1</div><div class="t" style="left:162.5px;top:690.88px;font-size:9px;color:#000;transform:scaleX(0.868);transform-origin:0 0;">C</div><div class="t" style="left:212px;top:690.88px;font-size:9px;color:#000;transform:scaleX(0.868);transform-origin:0 0;">2</div><div class="t" style="left:252.8px;top:690.88px;font-size:9px;color:#000;transform:scaleX(0.868);transform-origin:0 0;">63641337700803...</div><div class="t" style="left:329.5px;top:690.88px;font-size:9px;color:#000;transform:scaleX(0.868);transform-origin:0 0;">3969478</div><div class="t" style="left:495px;top:690.88px;font-size:9px;color:#000;transform:scaleX(0.868);transform-origin:0 0;">35062</div><div class="t" style="left:560.8px;top:690.88px;font-size:9px;color:#000;transform:scaleX(0.868);transform-origin:0 0;">76.43180651...</div><div class="t" style="left:620.2px;top:690.88px;font-size:9px;color:#000;transform:scaleX(0.868);transform-origin:0 0;">636413377093...</div><div class="t" style="left:688.6px;top:690.88px;font-size:9px;color:#000;transform:scaleX(0.868);transform-origin:0 0;">3973212</div><div class="t" style="left:836.3px;top:690.88px;font-size:9px;color:#000;transform:scaleX(0.868);transform-origin:0 0;">40557</div><div class="t" style="left:874.3px;top:690.88px;font-size:9px;color:#000;transform:scaleX(0.868);transform-origin:0 0;">121.4786074...</div><div class="t" style="left:932.8px;top:690.88px;font-size:9px;color:#000;transform:scaleX(0.868);transform-origin:0 0;">107.53</div><svg class="cb" style="left:47px;top:690px" width="10" height="10" viewBox="0 0 10 10"><rect x="0.5" y="0.5" width="8.5" height="8.5" fill="#fff" stroke="#5a5a5a" stroke-width="1"/><path d="M2 4.7 L4 6.7 L7.7 3" fill="none" stroke="#4a4a4a" stroke-width="1.1"/></svg><svg class="cb" style="left:450px;top:690px" width="10" height="10" viewBox="0 0 10 10"><rect x="0.5" y="0.5" width="8.5" height="8.5" fill="#fff" stroke="#5a5a5a" stroke-width="1"/><path d="M2 4.7 L4 6.7 L7.7 3" fill="none" stroke="#4a4a4a" stroke-width="1.1"/></svg><svg class="cb" style="left:796px;top:690px" width="10" height="10" viewBox="0 0 10 10"><rect x="0.5" y="0.5" width="8.5" height="8.5" fill="#fff" stroke="#5a5a5a" stroke-width="1"/><path d="M2 4.7 L4 6.7 L7.7 3" fill="none" stroke="#4a4a4a" stroke-width="1.1"/></svg><div class="a" style="left:38px;top:323px;width:1px;height:375px;background:#a0a0a0"></div><div class="a" style="left:64px;top:323px;width:1px;height:375px;background:#a0a0a0"></div><div class="a" style="left:114px;top:323px;width:1px;height:375px;background:#a0a0a0"></div><div class="a" style="left:160px;top:323px;width:1px;height:375px;background:#a0a0a0"></div><div class="a" style="left:208px;top:323px;width:1px;height:375px;background:#a0a0a0"></div><div class="a" style="left:250px;top:323px;width:1px;height:375px;background:#a0a0a0"></div><div class="a" style="left:327px;top:323px;width:1px;height:375px;background:#a0a0a0"></div><div class="a" style="left:418px;top:323px;width:1px;height:375px;background:#a0a0a0"></div><div class="a" style="left:492px;top:323px;width:1px;height:375px;background:#a0a0a0"></div><div class="a" style="left:558px;top:323px;width:1px;height:375px;background:#a0a0a0"></div><div class="a" style="left:618px;top:323px;width:1px;height:375px;background:#a0a0a0"></div><div class="a" style="left:685px;top:323px;width:1px;height:375px;background:#a0a0a0"></div><div class="a" style="left:768px;top:323px;width:1px;height:375px;background:#a0a0a0"></div><div class="a" style="left:833px;top:323px;width:1px;height:375px;background:#a0a0a0"></div><div class="a" style="left:871px;top:323px;width:1px;height:375px;background:#a0a0a0"></div><div class="a" style="left:930px;top:323px;width:1px;height:375px;background:#a0a0a0"></div>
<div class="a" style="left:959px;top:308px;width:11px;height:402px;background:#f0f0f0"></div>
<div class="a" style="left:959px;top:320px;width:11px;height:48px;background:#cdcdcd"></div>
<svg class="a" style="left:960px;top:310px" width="10" height="8" viewBox="0 0 10 8"><path d="M2 5.5 L5 2.5 L8 5.5" fill="none" stroke="#606060" stroke-width="1.3"/></svg>
<svg class="a" style="left:960px;top:687px" width="10" height="8" viewBox="0 0 10 8"><path d="M2 2.5 L5 5.5 L8 2.5" fill="none" stroke="#606060" stroke-width="1.3"/></svg>
<div class="a" style="left:9px;top:698px;width:950px;height:12px;background:#f0f0f0"></div>
<div class="a" style="left:21px;top:699px;width:324px;height:10px;background:#cdcdcd"></div>
<svg class="a" style="left:11px;top:700px" width="9" height="9" viewBox="0 0 9 9"><path d="M5.5 1.5 L2.5 4.5 L5.5 7.5" fill="none" stroke="#606060" stroke-width="1.3"/></svg>
<svg class="a" style="left:948px;top:700px" width="9" height="9" viewBox="0 0 9 9"><path d="M3.5 1.5 L6.5 4.5 L3.5 7.5" fill="none" stroke="#606060" stroke-width="1.3"/></svg>
</body></html>
